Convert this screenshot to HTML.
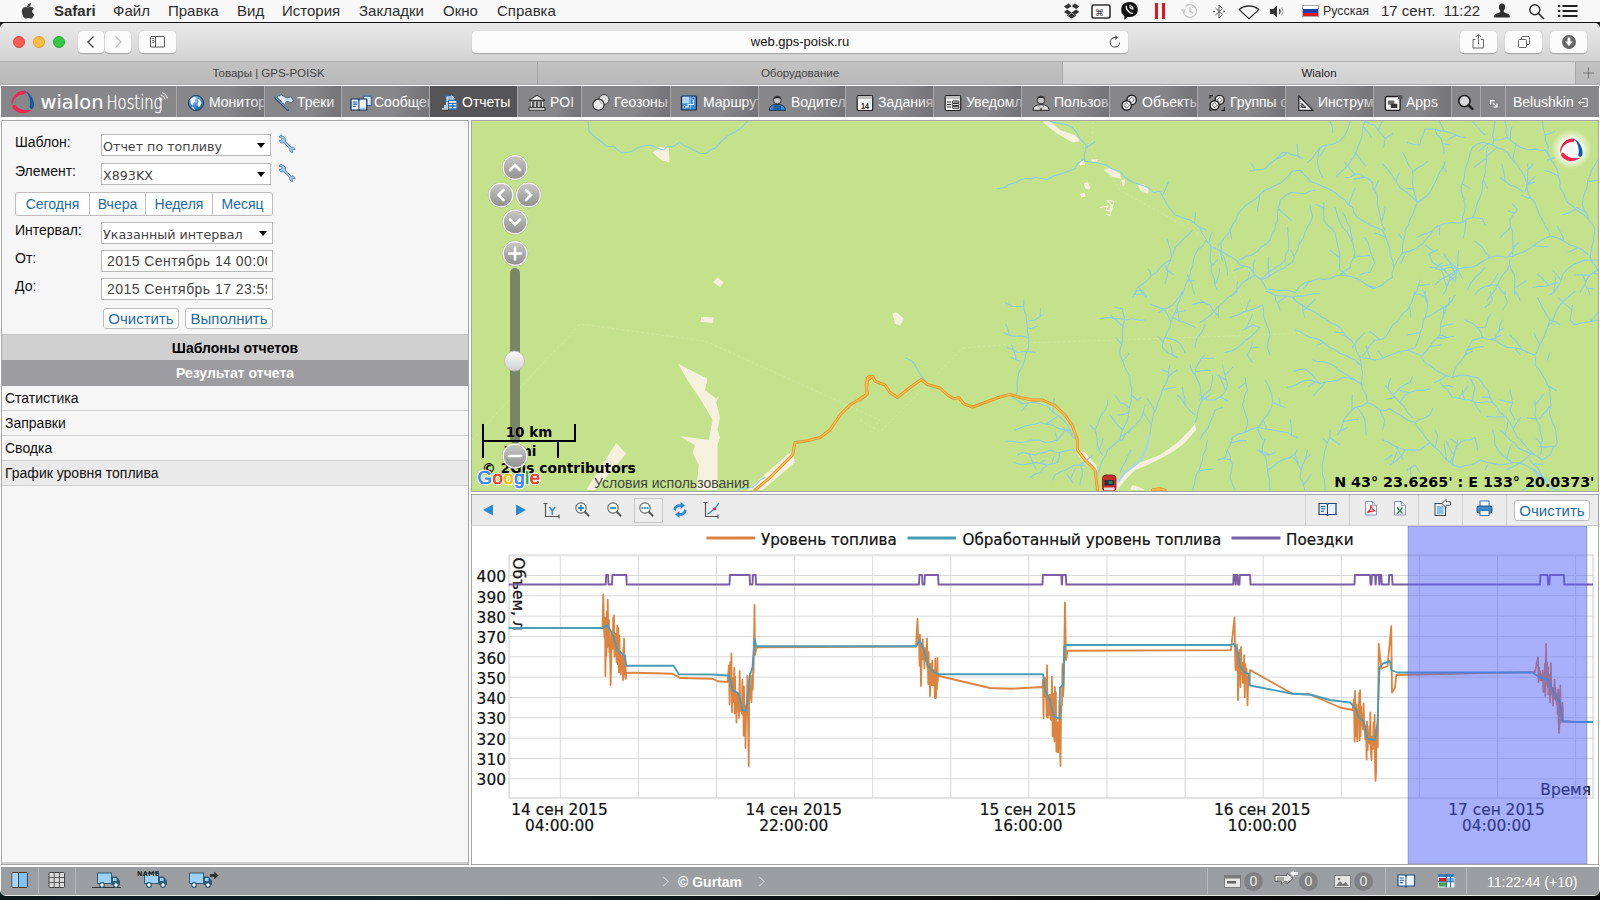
<!DOCTYPE html>
<html lang="ru">
<head>
<meta charset="utf-8">
<title>Wialon</title>
<style>
*{box-sizing:border-box;margin:0;padding:0}
html,body{width:1600px;height:900px;overflow:hidden;background:#fff}
body{font-family:"Liberation Sans",sans-serif;font-size:13px;color:#000;position:relative}
.abs{position:absolute}
/* ---------- mac menu bar ---------- */
#menubar{left:0;top:0;width:1600px;height:22px;background:#f8f8f8;color:#2e2e2e;font-size:15px;line-height:22px;white-space:nowrap}
#menubar span{position:absolute;top:0}
#menuline{left:0;top:22px;width:1600px;height:1px;background:#111}
/* ---------- safari toolbar ---------- */
#toolbar{left:0;top:23px;width:1600px;height:38px;background:linear-gradient(#e9e9e9,#d3d3d3);border-radius:5px 5px 0 0}
.tl{position:absolute;top:13px;width:12px;height:12px;border-radius:50%}
.tbtn{position:absolute;top:8px;height:22px;background:#fbfbfb;border-radius:4px;box-shadow:0 0.5px 1px rgba(0,0,0,.25)}
#urlbar{left:472px;top:8px;width:656px;height:22px;background:#fbfbfb;border-radius:4px;box-shadow:0 0.5px 1px rgba(0,0,0,.25);text-align:center;font-size:13px;line-height:22px;color:#111}
/* ---------- tab bar ---------- */
#tabbar{left:0;top:61px;width:1600px;height:24px;background:#bdbdbd;border-top:1px solid #b1b1b1;border-bottom:1px solid #a9a9a9;font-size:11.5px;color:#444}
.tab{position:absolute;top:0;height:22px;line-height:22px;text-align:center;background:linear-gradient(#c3c3c3,#b9b9b9);border-right:1px solid #a6a6a6}
.tab.act{background:linear-gradient(#dadada,#d0d0d0);color:#222}
/* ---------- wialon nav ---------- */
#nav{left:1px;top:86.2px;width:1598px;height:31.3px;background:#878789}
.ni{position:absolute;top:0;height:31.3px;overflow:hidden;white-space:nowrap;color:#fff;font-size:14px;line-height:31px;border-left:1px solid #a9a9ab;background:linear-gradient(90deg,#878789 0,#878789 58%,#747476 100%)}
.ni.act{background:#555557}
.ni .ic{position:absolute;left:8px;top:6.5px;width:22px;height:18px}
.ni .tx{position:absolute;left:32px;top:1px}
.ni .fade{position:absolute;right:0;top:0;width:14px;height:31px;background:linear-gradient(90deg,rgba(118,118,120,0),rgba(118,118,120,.55))}
.ni.act .fade{display:none}
/* ---------- left panel ---------- */
#left{left:1px;top:120px;width:468px;height:745px;background:#f6f6f6;border:1px solid #a5a5a7}
.lbl{position:absolute;left:13px;font-size:14px;color:#111;margin-top:-1px}
.sel{position:absolute;left:99px;width:170px;height:22px;background:#fff;border:1px solid #b9b9b9;font-family:"DejaVu Sans",sans-serif;font-size:12.7px;color:#444;line-height:19px;padding-left:1px;padding-top:1.5px;white-space:nowrap;overflow:hidden}
.sel:after{content:"";position:absolute;right:5px;top:8px;border:4px solid transparent;border-top:5px solid #000;border-bottom:0}
.inp{position:absolute;left:99px;width:172px;height:22px;background:#fff;border:1px solid #b9b9b9;font-size:14px;color:#444;line-height:21px;padding-left:5px;padding-right:5px;white-space:nowrap}
.inp span{display:block;overflow:hidden;letter-spacing:.45px}
.btn{position:absolute;height:24px;background:#fff;border:1px solid #bdbdbd;border-radius:3px;color:#1d6aa5;font-size:14px;line-height:22px;text-align:center}
.hdr{position:absolute;left:0;width:466px;height:25px;font-weight:bold;font-size:14px;line-height:26px;text-align:center}
.row{position:absolute;left:0;width:466px;height:25px;border-bottom:1px solid #d0d0d0;font-size:14px;line-height:24.5px;padding-left:3px;color:#111}
/* ---------- map ---------- */
#map{left:471px;top:120px;width:1128px;height:372px;background:#c4e28b;border:1px solid #a5a5a7;overflow:hidden}
/* ---------- chart ---------- */
#cbar{left:471px;top:494px;width:1128px;height:32px;background:#ececec;border:1px solid #a5a5a7;border-bottom-color:#cfcfcf}
.sep{position:absolute;top:0;width:1px;height:30px;background:#cfcfcf}
#chart{left:471px;top:526px;width:1128px;height:339px;background:#fff;border:1px solid #a5a5a7;border-top:0;overflow:hidden}
/* ---------- bottom ---------- */
#bottom{left:1px;top:866.6px;width:1598px;height:28.4px;background:#9d9ea1}
.bsep{position:absolute;top:1px;width:1px;height:26px;background:#b9b9bb}
.bdg{position:absolute;top:5px;width:19px;height:19px;border-radius:50%;background:#818183;color:#e9e9e9;font-size:14px;line-height:19px;text-align:center}
#desk{left:0;top:896px;width:1600px;height:4px;background:linear-gradient(90deg,#0a191e,#0d2229 25%,#0b0f0e 55%,#060604)}
</style>
</head>
<body>
<div id="menubar" class="abs">
 <svg class="abs" style="left:20px;top:1.500px" width="14.500" height="17.500" viewBox="0 0 15 18"><path fill="#3a3a3a" d="M10.3 4.2c.7-.9 1.1-2 1-3.2-1 .1-2.200.7-2.900 1.600-.600.800-1.200 1.900-1 3 1.100.1 2.200-.5 2.900-1.400z"/><path fill="#3a3a3a" d="M12.600 9.600c0-2 1.600-2.900 1.700-3-.9-1.400-2.400-1.600-2.900-1.600-1.200-.1-2.400.7-3 .7-.600 0-1.600-.7-2.600-.7-1.400 0-2.600.800-3.300 2-1.400 2.400-.400 6.100 1 8.100.7 1 1.500 2.100 2.500 2 1-.0 1.400-.6 2.600-.6s1.600.6 2.600.6c1.100 0 1.800-1 2.400-2 .8-1.100 1.100-2.200 1.100-2.300-.0 0-2.100-.8-2.100-3.200z"/></svg>
 <span style="left:54px;font-weight:bold">Safari</span>
 <span style="left:113px">Файл</span>
 <span style="left:168px">Правка</span>
 <span style="left:237px">Вид</span>
 <span style="left:282px">История</span>
 <span style="left:359px">Закладки</span>
 <span style="left:443px">Окно</span>
 <span style="left:497px">Справка</span>
 <!-- right status icons -->
 <svg class="abs" style="left:1062px;top:2px" width="22" height="18" viewBox="0 0 22 18"><g fill="#333"><path d="M6.500 1.500l-4.500 3 3.100 2.500 4.500-2.800zM2 10l4.500 3 3.100-2.600-4.500-2.800zM9.600 10.400l3.200 2.600 4.500-2.900-3.100-2.500zM17.300 4.500l-4.500-3-3.200 2.700 4.600 2.800zM9.600 11l-3.100 2.600-1.400-.9v1l4.500 2.700 4.600-2.700v-1l-1.400.9z"/></g></svg>
 <svg class="abs" style="left:1091px;top:3px" width="20" height="17" viewBox="0 0 20 17"><rect x="1" y="2" width="18" height="13" rx="1.500" fill="none" stroke="#333" stroke-width="1.600"/><text x="4" y="12.500" font-size="9" font-family="DejaVu Sans,sans-serif" fill="#333">⌘</text></svg>
 <svg class="abs" style="left:1120px;top:1px" width="19" height="20" viewBox="0 0 19 20"><path fill="#111" d="M9.500 1C4.500 1 1.200 3.800 1.200 8.800c0 3 1.100 5 3.100 6.200v3.800l3.200-2.900c.6.100 1.300.1 2 .1 5 0 8.300-2.700 8.300-7.200S14.500 1 9.500 1z"/><path fill="none" stroke="#fff" stroke-width="1.300" stroke-linecap="round" d="M6.300 5.200c-.5 3 2.600 6.700 6 7.100M9.800 4.700c1.800.2 3 1.500 3.100 3.300M10 6.600c.7.100 1.200.6 1.300 1.300"/></svg>
 <div class="abs" style="left:1155px;top:3px;width:3px;height:16px;background:#e0161c"></div>
 <div class="abs" style="left:1162px;top:3px;width:3px;height:16px;background:#e0161c"></div>
 <svg class="abs" style="left:1180px;top:2px" width="20" height="18" viewBox="0 0 20 18"><g fill="none" stroke="#c4c4c4" stroke-width="1.300"><path d="M3.500 9a6.500 6.500 0 1 0 2-4.700"/><path d="M10 5v4.300l3 1.700"/></g><path fill="#c4c4c4" d="M.8 7.500h5.400L3.500 10.800z"/></svg>
 <svg class="abs" style="left:1212px;top:3px" width="14" height="17" viewBox="0 0 14 17"><g fill="none" stroke="#555" stroke-width="1"><path d="M3.500 5l7 6.500L7 15V2l3.500 3.500-7 6.500"/></g><circle cx="2" cy="8.500" r=".9" fill="#555"/><circle cx="12" cy="8.500" r=".9" fill="#555"/></svg>
 <svg class="abs" style="left:1238px;top:4px" width="22" height="16" viewBox="0 0 22 16"><path fill="none" stroke="#333" stroke-width="1.300" stroke-linejoin="round" d="M1.200 5.600C6.500.8 15.500.8 20.800 5.600L11 14.800z"/></svg>
 <svg class="abs" style="left:1269px;top:4px" width="18" height="15" viewBox="0 0 18 15"><path fill="#333" d="M1 5h3.200L8 1.500v12L4.200 10H1z"/><path fill="none" stroke="#333" stroke-width="1.200" d="M10.300 5.200c1 1.400 1 3.200 0 4.600"/><path fill="none" stroke="#999" stroke-width="1.100" d="M12.600 3.700c1.700 2.300 1.700 5.300 0 7.600"/></svg>
 <div class="abs" style="left:1302px;top:5px;width:17px;height:12px;border:0.5px solid #aaa;background:linear-gradient(#fff 0,#fff 33%,#1c3fb4 33%,#1c3fb4 66%,#e3171f 66%)"></div>
 <span style="left:1323px;font-size:12.4px">Русская</span>
 <span style="left:1381px">17 сент.&nbsp; 11:22</span>
 <svg class="abs" style="left:1493px;top:3px" width="18" height="16" viewBox="0 0 18 16"><path fill="#2e2e2e" d="M9 .5c2 0 3.100 1.500 3.100 3.400 0 1.500-.6 2.900-1.300 3.700-.3.400-.2 1.300.3 1.600l4.200 1.900c.9.400 1.400 1 1.400 2v1.400H1.300v-1.400c0-1 .5-1.600 1.400-2l4.200-1.900c.5-.3.600-1.200.3-1.600C6.500 6.800 5.900 5.400 5.900 3.900 5.900 2 7 .5 9 .5z"/></svg>
 <svg class="abs" style="left:1528px;top:3px" width="17" height="17" viewBox="0 0 17 17"><circle cx="6.800" cy="6.800" r="5" fill="none" stroke="#2e2e2e" stroke-width="1.500"/><path d="M10.500 10.500l5 5" stroke="#2e2e2e" stroke-width="1.700" stroke-linecap="round"/></svg>
 <svg class="abs" style="left:1558px;top:5px" width="20" height="12" viewBox="0 0 20 12"><g fill="#222"><rect x="0" y="0" width="2.200" height="2"/><rect x="4.500" y="0" width="15" height="2"/><rect x="0" y="5" width="2.200" height="2"/><rect x="4.500" y="5" width="15" height="2"/><rect x="0" y="10" width="2.200" height="2"/><rect x="4.500" y="10" width="15" height="2"/></g></svg>
</div>
<div id="menuline" class="abs"></div>
<div class="abs" style="left:0;top:23px;width:1600px;height:8px;background:#111"></div>
<div id="toolbar" class="abs">
 <div class="tl" style="left:13px;background:#fc5b57;border:0.5px solid #e1453f"></div>
 <div class="tl" style="left:33px;background:#fdbc40;border:0.5px solid #dfa031"></div>
 <div class="tl" style="left:53px;background:#34c84a;border:0.5px solid #27aa35"></div>
 <div class="tbtn" style="left:78px;width:26px"><svg width="26" height="22" viewBox="0 0 26 22"><path d="M15.500 5.500l-5.500 5.500 5.500 5.500" fill="none" stroke="#4d4d4d" stroke-width="1.400"/></svg></div>
 <div class="tbtn" style="left:105px;width:26px"><svg width="26" height="22" viewBox="0 0 26 22"><path d="M10.500 5.500l5.500 5.500-5.500 5.500" fill="none" stroke="#c2c2c2" stroke-width="1.400"/></svg></div>
 <div class="tbtn" style="left:139px;width:37px"><svg width="37" height="22" viewBox="0 0 37 22"><rect x="11.500" y="5.500" width="14" height="10.500" rx="1" fill="none" stroke="#555" stroke-width="1"/><path d="M16.500 5.500v10.500" stroke="#555" stroke-width="1"/><path d="M13 7.500h2M13 9.500h2M13 11.500h2" stroke="#555" stroke-width=".8"/></svg></div>
 <div id="urlbar" class="abs">web.gps-poisk.ru
  <svg class="abs" style="left:635px;top:3px" width="16" height="16" viewBox="0 0 16 16"><path d="M12.600 8.500A4.700 4.700 0 1 1 8 3.600h1" fill="none" stroke="#555" stroke-width="1.100"/><path d="M8.300 1.200l2.800 2.400-2.800 2.300z" fill="#555"/></svg>
 </div>
 <div class="tbtn" style="left:1460px;width:37px"><svg width="37" height="22" viewBox="0 0 37 22"><path d="M15.500 8.500h-2.500v8.500h10.500v-8.500h-2.500M18.500 13V3.500M15.800 6l2.700-2.700L21.200 6" fill="none" stroke="#666" stroke-width="1"/></svg></div>
 <div class="tbtn" style="left:1505px;width:37px"><svg width="37" height="22" viewBox="0 0 37 22"><rect x="13.500" y="8.500" width="8" height="8" rx="1" fill="none" stroke="#666" stroke-width="1"/><path d="M16.500 8.500v-2a1 1 0 0 1 1-1h6a1 1 0 0 1 1 1v6a1 1 0 0 1-1 1h-2" fill="none" stroke="#666" stroke-width="1"/></svg></div>
 <div class="tbtn" style="left:1550px;width:37px"><svg width="37" height="22" viewBox="0 0 37 22"><circle cx="19" cy="11" r="7" fill="#666"/><path d="M17.600 6.500h2.800v4h2.600l-4 4.500-4-4.500h2.600z" fill="#fff"/></svg></div>
</div>
<div id="tabbar" class="abs">
 <div class="tab" style="left:0;width:538px">Товары | GPS-POISK</div>
 <div class="tab" style="left:538px;width:525px">Оборудование</div>
 <div class="tab act" style="left:1063px;width:513px">Wialon</div>
 <div class="tab" style="left:1576px;width:24px;border:0"><svg width="24" height="22" viewBox="0 0 24 22"><path d="M12.500 5.500v11M7 11h11" stroke="#777" stroke-width="1"/></svg></div>
</div>



<div id="nav" class="abs">
<div class="abs" style="left:0;top:0;width:175px;height:31px">
<svg width="175" height="31" viewBox="0 0 175 31">
 <g transform="translate(21.800,15.500)"><path d="M2,-10.700 C-3,-11.800 -9,-7.500 -11.100,-0.600 C-11.500,1 -11.300,2.800 -10.800,3.900 C-10.300,0 -8.300,-3.500 -5,-5.600 C-3.200,-6.800 -1.200,-7 1.800,-7.600 C3.800,-8.200 3.600,-10.400 2,-10.700 Z" fill="#f0244e"/><path d="M-10.300,5 C-10.500,7 -7.500,10 -3,11.300 C1,12.300 6,11 9.200,8.200 C6,9.300 1,9 -2.500,7.600 C-5,6.500 -6.500,4.500 -7.800,3.600 C-9,3 -10.200,3.800 -10.300,5 Z" fill="#f0244e"/><path d="M1.700,-11.100 C6,-9.500 9.500,-5 10.800,0 C11.600,3 11.300,5.500 9.900,7.100 C8.800,8 7,7.200 6.900,5.600 C7.800,2 7.500,-2.500 5.500,-6.500 C4.500,-8.500 3,-10 1.700,-11.100 Z" fill="#0f5aa8"/></g>
 <text x="39.500" y="22.800" font-family="DejaVu Sans,sans-serif" font-size="19.500" fill="#fff" stroke="#fff" stroke-width=".1" textLength="63" lengthAdjust="spacingAndGlyphs">wialon</text>
 <text x="105.500" y="22.800" font-family="DejaVu Sans,sans-serif" font-weight="200" font-size="20" fill="#fff" stroke="#fff" stroke-width=".35" textLength="56" lengthAdjust="spacingAndGlyphs">Hosting</text>
 <g fill="none" stroke="#fff" stroke-width="1" stroke-linecap="round"><path d="M158.500,11.500a3 3 0 0 1 2.500 2.500"/><path d="M160,9a5.500 5.500 0 0 1 4 4"/><path d="M161.500,6.500a8 8 0 0 1 5 5.500"/></g>
</svg></div>
<div class="ni" style="left:175px;width:88px"><svg class="ic" viewBox="0 0 22 18"><defs><radialGradient id="gg" cx=".4" cy=".3" r=".8"><stop offset="0" stop-color="#8ec6f4"/><stop offset=".6" stop-color="#2f7fcc"/><stop offset="1" stop-color="#1b4f8c"/></radialGradient></defs><circle cx="11" cy="10" r="7.600" fill="url(#gg)" stroke="#2f3b4a" stroke-width="1"/><path d="M5.500,6.500 c1.500,-2 3.500,-2.500 5,-2.300 l1,1.600 -1.800,1 .8,1.800 -2,1.200 -.8,3 -1.800,-2 z M12.500,5.500 l2.500,1.200 1.500,3.300 -1.500,3.500 -2,.5 -.5,-3 1,-2.500z M7,13.500 l2,1 1,2.500 -2,-1z" fill="#f2f8fd"/></svg><span class="tx">Мониторинг</span><i class="fade"></i></div>
<div class="ni" style="left:263px;width:77px"><svg class="ic" viewBox="0 0 22 18"><path d="M3.600,4.400 L8,1.900 L14.200,5 L18,3.700 L20.500,7.500 L18,10 L14.200,8.100 L11.700,10.600 Z" fill="#cfe5f8" stroke="#3d5f82" stroke-width=".9" stroke-linejoin="round"/><path d="M8,1.900 L11.700,10.600 M5.500,3.500 l5,6.500" stroke="#fff" stroke-width="1"/><path d="M2.400,5 L14.900,16.900" stroke="#27496d" stroke-width="2.200" stroke-linecap="round"/><path d="M2.800,4.800 L15,16.300" stroke="#a6d2f5" stroke-width=".9" stroke-linecap="round"/></svg><span class="tx">Треки</span><i class="fade"></i></div>
<div class="ni" style="left:340px;width:88px"><svg class="ic" viewBox="0 0 22 18"><rect x="13.400" y="3.200" width="7.800" height="9.300" fill="#d9ecfc" stroke="#2b5c9a" stroke-width="1"/><path d="M1,6 h7.200 l.7,.8 .7,-.8 h7.200 v11 h-7.200 l-.7,.7 -.7,-.7 h-7.200z" fill="#e6f2fd" stroke="#162f4f" stroke-width="1.200" stroke-linejoin="round"/><path d="M8.900,6.800 v10.500" stroke="#162f4f" stroke-width="1"/><path d="M2.800,9 h4.500 M2.800,11.200 h4.500 M2.800,13.400 h3" stroke="#2b5c9a" stroke-width="1.200"/><rect x="10.300" y="14.500" width="5.500" height="1.500" fill="#9fcdf3"/></svg><span class="tx">Сообщения</span><i class="fade"></i></div>
<div class="ni act" style="left:428px;width:88px"><svg class="ic" viewBox="0 0 22 18"><rect x="8" y="3" width="8" height="6" fill="#fff" stroke="#2b6cb0" stroke-width="1"/><path d="M9.500,5 h5 M9.500,7 h5" stroke="#2b6cb0" stroke-width="1"/><path d="M13.500,2.800 l3,2.700" stroke="#ddd" stroke-width="1"/><rect x="10.400" y="7.400" width="8.600" height="8.600" rx="1" fill="#fff" stroke="#2b6cb0" stroke-width="1.400"/><path d="M11,10.300 h7.500 M11,13 h7.500 M14.700,10.300 v5.500" stroke="#2b6cb0" stroke-width="1.300"/><path d="M5,17 v-2 M7,17 v-5 M9,17 v-8" stroke="#e6f0fa" stroke-width="1.500"/><path d="M4,17.300 h6.500" stroke="#333" stroke-width=".8"/></svg><span class="tx">Отчеты</span><i class="fade"></i></div>
<div class="ni" style="left:516px;width:64px"><svg class="ic" viewBox="0 0 22 18"><path d="M11,2.300 L3,7.300 h16z" fill="#f6f6f6" stroke="#222" stroke-width="1" stroke-linejoin="round"/><path d="M5.300,8.500 v5.800 M9.100,8.500 v5.800 M12.900,8.500 v5.800 M16.700,8.500 v5.800" stroke="#222" stroke-width="2.800"/><path d="M5.300,8.500 v5.800 M9.100,8.500 v5.800 M12.900,8.500 v5.800 M16.700,8.500 v5.800" stroke="#f6f6f6" stroke-width="1.400"/><rect x="3" y="14.800" width="16" height="2.400" fill="#f6f6f6" stroke="#222" stroke-width=".9"/></svg><span class="tx">POI</span><i class="fade"></i></div>
<div class="ni" style="left:580px;width:89px"><svg class="ic" viewBox="0 0 22 18"><circle cx="14" cy="6.500" r="5" fill="#dcdcdc" stroke="#3a3a3a" stroke-width="1"/><circle cx="8.500" cy="11.700" r="5.600" fill="#ececec" stroke="#2a2a2a" stroke-width="1.100"/><path d="M9.500,6.300 a5 5 0 0 0 4.300,5" fill="none" stroke="#888" stroke-width=".7"/></svg><span class="tx">Геозоны</span><i class="fade"></i></div>
<div class="ni" style="left:669px;width:88px"><svg class="ic" viewBox="0 0 22 18"><rect x="2.500" y="3" width="15" height="14" rx="1" fill="#3f8ad4" stroke="#172c47" stroke-width="1.200"/><rect x="3.300" y="3.800" width="7" height="6.500" fill="#bfe0fb"/><path d="M3.300,6 h7 M3.300,8 h7" stroke="#8cc4f0" stroke-width=".8"/><path d="M11.500,3.500 v13" stroke="#8cc4f0" stroke-width=".8"/><path d="M5.500,14 h3.500 v-2.500 h5.500 v-6" fill="none" stroke="#e9f4fd" stroke-width="1.200"/><circle cx="5.500" cy="14" r="1.300" fill="#1b4f8c" stroke="#e9f4fd" stroke-width=".6"/><circle cx="14.500" cy="5.500" r="1.300" fill="#1b4f8c" stroke="#e9f4fd" stroke-width=".6"/></svg><span class="tx">Маршруты</span><i class="fade"></i></div>
<div class="ni" style="left:757px;width:87px"><svg class="ic" viewBox="0 0 22 18"><path d="M2.300,17.300 c0,-4 2.500,-5.800 8,-5.800 s8,1.800 8,5.800z" fill="#3f8ad4" stroke="#172c47" stroke-width="1"/><path d="M6.500,17 v-4.500 h7.500 v4.500" fill="#1f5c9a"/><circle cx="10.300" cy="7" r="3.900" fill="#c9c9c9" stroke="#2a2a2a" stroke-width=".9"/><path d="M6.300,6.500 c.3,-4.500 7.700,-4.500 8,0 c-2,-1.800 -6,-1.800 -8,0z" fill="#2a2a2a"/></svg><span class="tx">Водители</span><i class="fade"></i></div>
<div class="ni" style="left:844px;width:88px"><svg class="ic" viewBox="0 0 22 18"><rect x="3.200" y="2.500" width="15.500" height="15" rx="1.500" fill="#f4f4f4" stroke="#222" stroke-width="1.200"/><path d="M3.800,3 h14.300 v2.500 l-.9,.8 -.9,-.8 -.9,.8 -.9,-.8 -.9,.8 -.9,-.8 -.9,.8 -.9,-.8 -.9,.8 -.9,-.8 -.9,.8 -.9,-.8 -.9,.8 -.9,-.8 -.9,.8 -.8,-.8z" fill="#bdbdbd"/><text x="11" y="15.600" font-size="9" font-weight="bold" text-anchor="middle" font-family="Liberation Sans,sans-serif" fill="#222" textLength="8" lengthAdjust="spacingAndGlyphs">14</text></svg><span class="tx">Задания</span><i class="fade"></i></div>
<div class="ni" style="left:932px;width:88px"><svg class="ic" viewBox="0 0 22 18"><rect x="3.200" y="2.500" width="15.500" height="15" rx="1.500" fill="#f4f4f4" stroke="#222" stroke-width="1.200"/><path d="M3.800,3 h14.300 v2.500 l-.9,.8 -.9,-.8 -.9,.8 -.9,-.8 -.9,.8 -.9,-.8 -.9,.8 -.9,-.8 -.9,.8 -.9,-.8 -.9,.8 -.9,-.8 -.9,.8 -.9,-.8 -.9,.8 -.8,-.8z" fill="#bdbdbd"/><path d="M5,9 h4 M5,11.500 h4 M5,14 h4" stroke="#333" stroke-width="1.200"/><rect x="10.300" y="8" width="6.800" height="2" rx=".8" fill="none" stroke="#222" stroke-width="1"/><rect x="10.300" y="10.600" width="6.800" height="2" rx=".8" fill="none" stroke="#222" stroke-width="1"/><rect x="10.300" y="13.200" width="6.800" height="2" rx=".8" fill="none" stroke="#222" stroke-width="1"/></svg><span class="tx">Уведомления</span><i class="fade"></i></div>
<div class="ni" style="left:1020px;width:88px"><svg class="ic" viewBox="0 0 22 18"><path d="M3,17.300 c0,-3.500 2.500,-5.500 8,-5.500 s8,2 8,5.500z" fill="#e2e2e2" stroke="#222" stroke-width="1"/><path d="M11,12 l-2.500,1.500 2.500,3.500 2.500,-3.500z" fill="#fafafa" stroke="#444" stroke-width=".5"/><path d="M11,13 l-.8,3.800 h1.600z" fill="#333"/><circle cx="11" cy="7" r="3.900" fill="#c4c4c4" stroke="#222" stroke-width=".9"/><path d="M7,6.300 c.3,-4.300 7.700,-4.300 8,0 c-2,-1.600 -6,-1.600 -8,0z" fill="#333"/></svg><span class="tx">Пользователи</span><i class="fade"></i></div>
<div class="ni" style="left:1108px;width:88px"><svg class="ic" viewBox="0 0 22 18"><circle cx="13.600" cy="6.900" r="4.700" fill="#f0f0f0" stroke="#1e1e1e" stroke-width="1.400"/><circle cx="8.600" cy="12.500" r="4.700" fill="#f0f0f0" stroke="#1e1e1e" stroke-width="1.400"/><path d="M13.600,4.200 l2.500,2.700 -2.500,2.700 -2.500,-2.700z M8.600,9.800 l2.500,2.700 -2.500,2.700 -2.500,-2.700z" fill="#fff" stroke="#555" stroke-width=".9"/></svg><span class="tx">Объекты</span><i class="fade"></i></div>
<div class="ni" style="left:1196px;width:88px"><svg class="ic" viewBox="0 0 22 18"><circle cx="13.600" cy="6.900" r="4.500" fill="#f0f0f0" stroke="#1e1e1e" stroke-width="1.400"/><circle cx="8.600" cy="12.300" r="4.500" fill="#f0f0f0" stroke="#1e1e1e" stroke-width="1.400"/><path d="M13.600,4.300 l2.400,2.600 -2.400,2.600 -2.400,-2.600z M8.600,9.700 l2.400,2.600 -2.400,2.600 -2.400,-2.600z" fill="#fff" stroke="#555" stroke-width=".9"/><path d="M4,5.500 v-2.800 h3 M18.300,14 v3.300 h-3 M4,14.500 v2.800 h1.500" fill="none" stroke="#1e1e1e" stroke-width="1.200"/></svg><span class="tx">Группы объектов</span><i class="fade"></i></div>
<div class="ni" style="left:1284px;width:88px"><svg class="ic" viewBox="0 0 22 18"><path d="M4.800,3 V17.400 H19z" fill="#efefef" stroke="#222" stroke-width="1.200" stroke-linejoin="round"/><path d="M7.800,10.300 V14.600 H12z" fill="#8a8a8c" stroke="#222" stroke-width=".9" stroke-linejoin="round"/><path d="M5.500,6.500 h1.200 M5.500,8.500 h1.200 M5.500,10.500 h1.200 M5.500,12.500 h1.200 M5.500,14.500 h1.200" stroke="#555" stroke-width=".7"/></svg><span class="tx">Инструменты</span><i class="fade"></i></div>
<div class="ni" style="left:1372px;width:78px"><svg class="ic" viewBox="0 0 22 18"><rect x="3.300" y="3.500" width="14.800" height="14" rx="1.800" fill="#f3f3f3" stroke="#1e1e1e" stroke-width="1.300"/><rect x="5.800" y="7.500" width="6.500" height="4.300" rx=".6" fill="#6a6a6a"/><rect x="8.800" y="10.800" width="6.500" height="4.300" rx=".6" fill="#333"/><rect x="16" y="2.300" width="4.600" height="3.800" rx=".6" fill="#555"/></svg><span class="tx">Apps</span><i class="fade"></i></div>
<div class="ni" style="left:1450px;width:29px;background:#878789"><svg class="abs" style="left:5px;top:7px" width="20" height="20" viewBox="0 0 20 20"><circle cx="7.400" cy="8.100" r="5.600" fill="#d8d8d8" stroke="#1a1a1a" stroke-width="1.500"/><path d="M11.500,12.200 l4,3.800" stroke="#1a1a1a" stroke-width="2.400" stroke-linecap="round"/></svg></div>
<div class="ni" style="left:1479px;width:25px;background:#878789"><svg class="abs" style="left:8.500px;top:13.500px" width="8" height="8" viewBox="0 0 8 8"><path d="M.6,5 V.6 H5" fill="none" stroke="#fff" stroke-width="1.100"/><path d="M2.800,2.800 l4,4 M7,3.600 v3.400 h-3.400" fill="none" stroke="#fff" stroke-width="1.200"/></svg></div>
<div class="ni" style="left:1504px;width:94px;background:#878789"><span class="tx" style="left:7px">Belushkin</span><svg class="abs" style="left:71.500px;top:11.500px" width="10" height="9" viewBox="0 0 10 9"><path d="M4,.6 h5.200 v7.800 H4" fill="none" stroke="#fff" stroke-width="1"/><path d="M6.500,4.500 H.8 M2.800,2.300 L.8,4.500 2.800,6.700" fill="none" stroke="#fff" stroke-width="1"/></svg></div>
</div>
<div id="left" class="abs">
 <div class="lbl" style="top:14px">Шаблон:</div>
 <div class="sel" style="top:13px">Отчет по топливу</div>
 <svg class="abs wr" style="left:276px;top:13px" width="19" height="19" viewBox="0 0 19 19"><path d="M3.200 1.200c-1 .3-1.800 1-2.200 2l2.300.2.700 1.400-1.300 1.700-1.600-.3c.2 1.300 1 2.200 2.100 2.600 1 .4 1.900.3 2.700-.1l5.800 6.100c-.3 1-.1 2 .6 2.700.7.700 1.600 1 2.500.9l-.6-1.700 1.100-1.300 1.800.2c-.1-.9-.6-1.700-1.500-2.200-.8-.5-1.700-.5-2.500-.2L7.300 7.100c.4-.9.400-1.900 0-2.800-.5-1-1.400-1.700-2.500-1.900z" fill="#9cc6ee" stroke="#4a6f96" stroke-width=".8" stroke-linejoin="round"/></svg>
 <div class="lbl" style="top:43px">Элемент:</div>
 <div class="sel" style="top:42px">X893KX</div>
 <svg class="abs wr" style="left:276px;top:42px" width="19" height="19" viewBox="0 0 19 19"><path d="M3.200 1.200c-1 .3-1.800 1-2.200 2l2.300.2.700 1.400-1.300 1.700-1.600-.3c.2 1.300 1 2.200 2.100 2.600 1 .4 1.900.3 2.700-.1l5.800 6.100c-.3 1-.1 2 .6 2.700.7.700 1.600 1 2.500.9l-.6-1.700 1.100-1.300 1.800.2c-.1-.9-.6-1.700-1.500-2.200-.8-.5-1.700-.5-2.500-.2L7.300 7.100c.4-.9.400-1.900 0-2.800-.5-1-1.400-1.700-2.500-1.900z" fill="#9cc6ee" stroke="#4a6f96" stroke-width=".8" stroke-linejoin="round"/></svg>
 <div class="abs" style="left:13px;top:71px;width:258px;height:24px;background:#fff;border:1px solid #bdbdbd;border-radius:3px"></div>
 <div class="btn" style="left:13px;top:71px;width:75px;border-color:transparent #bdbdbd transparent transparent;border-radius:0;background:none">Сегодня</div>
 <div class="btn" style="left:87px;top:71px;width:57px;border-color:transparent #bdbdbd transparent transparent;border-radius:0;background:none">Вчера</div>
 <div class="btn" style="left:143px;top:71px;width:68px;border-color:transparent #bdbdbd transparent transparent;border-radius:0;background:none">Неделя</div>
 <div class="btn" style="left:210px;top:71px;width:61px;border-color:transparent;border-radius:0;background:none">Месяц</div>
 <div class="lbl" style="top:102px">Интервал:</div>
 <div class="sel" style="top:101px;width:172px">Указанный интервал</div>
 <div class="lbl" style="top:130px">От:</div>
 <div class="inp" style="top:129px"><span>2015 Сентябрь 14 00:00</span></div>
 <div class="lbl" style="top:158px">До:</div>
 <div class="inp" style="top:157px"><span>2015 Сентябрь 17 23:59</span></div>
 <div class="btn" style="left:101px;top:187px;width:76px;height:21px;line-height:20px;font-size:15px">Очистить</div>
 <div class="btn" style="left:183px;top:187px;width:88px;height:21px;line-height:20px;font-size:15px">Выполнить</div>
 <div class="abs" style="left:0;top:213px;width:466px;height:1px;background:#c4c4c4"></div>
 <div class="hdr" style="top:214px;background:#d1d0d1;color:#000">Шаблоны отчетов</div>
 <div class="hdr" style="top:239px;height:26px;background:#9d9d9f;color:#fff">Результат отчета</div>
 <div class="row" style="top:265px">Статистика</div>
 <div class="row" style="top:290px">Заправки</div>
 <div class="row" style="top:315px">Сводка</div>
 <div class="row" style="top:340px;background:#eaeaea">График уровня топлива</div>
 <div class="abs bottomband" style="left:0;top:741px;width:466px;height:2px;background:#d1d0d1"></div>
</div>

<div id="map" class="abs">
<svg class="abs" style="left:0;top:0" width="1127" height="370" viewBox="472 121 1127 370">
<defs>
<linearGradient id="gb" x1="0" y1="0" x2="0" y2="1"><stop offset="0" stop-color="#c9c9c9"/><stop offset="1" stop-color="#8f8f8f"/></linearGradient>
<linearGradient id="gh" x1="0" y1="0" x2="0" y2="1"><stop offset="0" stop-color="#fdfdfd"/><stop offset="1" stop-color="#cfcfcf"/></linearGradient>
<radialGradient id="glow"><stop offset="0" stop-color="#f4f4f4" stop-opacity="1"/><stop offset=".5" stop-color="#fff" stop-opacity=".98"/><stop offset=".68" stop-color="#fff" stop-opacity=".55"/><stop offset="1" stop-color="#fff" stop-opacity="0"/></radialGradient>
</defs>
<path d="M678,363.8 707.5,378.8 705,390 716.2,398.8 718.8,396.2 716.2,402.5 720,417.5 717.5,430 720,437.5 717.5,445 717.5,490 696.2,490 698.8,465 692.5,452.5 695,445 680,436.2 708.8,440 712.5,420 702.5,402.5 687.5,380Z M616.2,443 626.2,453.8 595,490 586.2,490Z M792.5,450 795,462.5 762.5,490 747.5,490Z M701.2,317 713.8,317.5 713,323 700.5,322Z M652.5,152.5 660,147 668.8,148 669.5,162.5 661.2,160Z M717.5,277.5 723.8,282.5 720,287 713,282.5Z M1042.5,121.2 1050,121.2 1060,130 1075,135 1080,141.2 1072.5,142.5 1057.5,133.8 1047.5,126.2Z M1103.8,170 1110,168 1120,173.8 1121.2,178.8 1112.5,177Z M1137.5,185.5 1143.8,183.8 1148.8,190 1147.5,193.8 1141.2,191.2Z M1083.8,183.8 1087.5,182 1090.5,187.5 1088.8,190 1085,188Z M1080,194 1084.5,193 1085.5,196.5 1081.5,197.5Z M892.5,313.8 896.2,312 903.8,318.8 900,325.5 895,323.8Z M1078.8,161.2 1083.8,160 1085,164.5 1080,165.5Z M1091.2,159.5 1097.5,159.5 1097.5,161.5 1092,161.5Z M1121.2,180 1125,179.5 1124.5,185.5 1122.5,186.2Z M1076.2,450 1085,452.5 1096.2,465 1097.5,470 1092.5,470 1080,457.5Z M1195,423.8 1196.2,430 1182.5,445 1167.5,455 1147.5,465 1135,470 1125,480 1117.5,490 1115,482.5 1125,472.5 1140,462.5 1160,455 1177.5,442.5 1190,430Z M1130,490 1132.5,485 1140,487.5 1145,490Z" fill="#f6f1df"/>
<path d="M1100,207.5 1107.5,206.2 1106.2,210 1110,211.2 1111.2,205 1107.5,200.5 1113.8,201.2 1110,215 1106.2,214.5" fill="none" stroke="#f6f1df" stroke-width="1.200"/>
<g fill="none" stroke="#d5e8a8" stroke-width=".7" stroke-dasharray="3 2"><path d="M561,345 L580,324 L705,341 L880,420 L870,432"/><path d="M963,348 L1027,343 L1260,335 L1300,333"/><path d="M1093,121 L1092,150 L1120,190 L1200,235 L1230,260 L1250,330"/><path d="M472,440 L560,345"/><path d="M860,420 L880,432 L963,348"/></g>
<path d="M1200,227.5 1201.8,232.8 1205,237.5 1207.6,242.2 1211.2,246.2 1218.8,250 1223.2,252.3 1227.5,255 1232.8,257.6 1237.5,261.2 1240,265 1245,266.3 1250,267.5 1255,275 1261.2,280 1263.9,284.3 1266.2,288.8 1275,290 1280,290.6 1285,290 1290.1,290.8 1295,292.5 M1295,292.5 1299.4,286.9 1305,282.5 1311.5,281.4 1317.5,278.8 1323.8,279.4 1330,278.8 1334.8,276.4 1340,275 1345,275.6 1350,276.2 1355,278 1360,280 1364.4,283.2 1368.9,286.4 1373.8,288.8 1382.5,285 1387,280.5 1392.5,277.5 1392.1,272.4 1393.8,267.5 1397.5,260 1402.5,252.5 1409,251.4 1415,248.8 1422.5,243.8 1426.1,239.3 1430,235 1435,227.5 1443.8,223.8 1452.5,222.5 1457.5,223.1 1462.5,222.5 1467,219 1472.5,217.5 1477.5,218 1482.5,218.8 1485,225 M1218.8,245 1225,237.5 1229.6,231.8 1232.5,225 1235.9,220.4 1237.5,215 1241,210.1 1245.2,206 1250,202.5 1255.5,198.9 1260.3,194.6 1265,190 1270.1,188.3 1274.8,185.5 1280,183.8 1284.3,179.8 1288.5,175.6 1292.5,171.2 1300,170 1303.2,173.9 1307.2,177 1310,181.2 1316.3,183.6 1322.5,186.2 1328.9,189.1 1335,192.5 1339.7,196.6 1345,200 1348,204.5 1352.5,207.5 1354.1,212.9 1357.5,217.5 1363.7,221.3 1370,225 1376.3,227.4 1382.5,230 1385.5,236.1 1387.5,242.5 1389.8,248.5 1390,255 1392.9,260.9 1393.8,267.5 M1250,171.2 1254.9,169.8 1260,169.7 1265,168.8 1269.2,164.5 1273.9,160.8 1278.3,156.8 1282.5,152.5 1287.7,152.8 1292.5,155 1297.9,155.9 1302.5,158.8 M1322.5,177.5 1320.3,172.7 1318.3,167.8 1317.5,162.5 1318.1,157.5 1318.4,152.4 1320,147.5 1324.8,145.3 1329.9,144.8 1335,143.8 1340.6,140.1 1345,135 1348.1,128.3 1350,121.2 M1336.2,176.2 1341,171.8 1345.8,167.4 1350,162.5 1353.1,157.8 1355.9,152.9 1357.5,147.5 1359.7,142.7 1361.7,137.8 1362.5,132.5 1362.7,126.6 1365,121.2 M1365,121.2 1369.8,123.7 1375,125 1377.8,130 1381.7,134.2 1385,138.8 1383.8,147.5 M1385,138.8 1392.5,133.8 M1240,260 1245.6,256.5 1252.1,255 1257.5,251.2 1261.1,246.9 1266.1,244.1 1270,240 1271.7,234.6 1275,230 1275.3,224.9 1277.7,220.2 1277.5,215 1277.7,209.9 1279.5,205.1 1280,200 1284.9,196.2 1290,192.5 1295,192.8 1300,193.4 1305,193.8 1309.8,191.3 1315,190 M1287.5,227.5 1288,233.3 1288.6,239.1 1288.8,245 1288.3,250.2 1285.5,254.8 1285,260 1281.5,264.2 1276.7,266.7 1272.5,270 1267.8,272.2 1264.7,276.6 1260,278.8 M1310,205 1311.1,211.3 1312.5,217.5 1310.1,222.6 1307.3,227.4 1305,232.5 1303.1,238.6 1299.4,243.9 1297.5,250 1294.3,256 1292.5,262.5 1288,264.7 1284.1,268.1 1279.4,270 1275,272.5 1270.6,275.3 1266.1,278 1261.2,280 M1323.8,202.5 1323.9,208.3 1323.7,214.2 1323.8,220 1326.8,224.8 1331.3,228.3 1335,232.5 1336.2,238.3 1337.3,244.2 1338.8,250 1339.8,255 1339.4,260 1339.4,265 1340,270 1347.5,276.2 M1335,207.5 1336.7,212.5 1338,217.6 1340,222.5 1343,227.7 1347.3,232.1 1350,237.5 1352.7,242.2 1353.6,247.4 1355,252.5 1353.8,257.7 1351,262.3 1350,267.5 1344.7,270.9 1340,275 M1342.5,212.5 1345.5,217.3 1347.1,222.7 1350,227.5 1350.9,233.8 1352.5,240 M1365,237.5 1368.3,243.4 1370,250 1372.1,256.4 1375,262.5 1372.2,267.4 1370,272.5 1364.8,272.8 1360,275 M1345,177.5 1350.2,177.3 1354.7,174 1360,173.8 1363.9,177.1 1368.8,179 1372.5,182.5 1373.1,188.6 1376.9,193.9 1377.5,200 1377.5,205.1 1378.8,210.1 1380,215 1380.9,220.2 1382.3,225.3 1385,230 M1382.5,163.8 1386.5,168 1390,172.5 1393.4,177.5 1396.8,182.4 1400,187.5 1404.2,190.7 1408.5,194 1412.5,197.5 1417.5,202.5 M1402.5,152.5 1405,156.9 1406.9,161.6 1409.1,166.1 1412.5,170 1413,176.2 1412.5,182.5 1413.2,188.9 1415,195 1417.5,202.5 1414.6,208.6 1412.5,215 1409.7,219.8 1408.3,225.4 1405,230 1405.2,235.2 1403.6,240 1402.5,245 1402.5,252.5 M1412.5,172.5 1417.1,168.2 1422.7,165.3 1427.5,161.2 M1417.5,202.5 1421.9,199.5 1426.2,196.3 1430,192.5 1432.5,187.5 1435,182.5 1437.5,177.5 1439.8,172 1443.5,167.1 1445,161.2 M1472.5,217.5 1475,212.8 1476.2,207.6 1477.5,202.5 1479.7,197.7 1481.7,192.8 1482.5,187.5 1482.6,182.4 1484,177.5 1485.3,172.6 1485,167.5 1486.4,162.6 1486.4,157.5 1486.2,152.4 1487.5,147.5 M1462.5,222.5 1462.6,216.6 1464.6,210.9 1465,205 1464,199.9 1462.4,195 1461.2,190 1461.5,184.9 1463.7,180.1 1464.7,175.1 1465,170 1466.9,164.4 1468.8,158.8 1470.1,152.9 1472.5,147.5 1477,144 1482.5,142.5 1487.6,143.5 1492.5,145 1497.4,147.7 1502.9,149.2 1507.5,152.5 1510.7,157.9 1515,162.5 1518.8,167.2 1522.2,172.2 1525,177.5 1527.2,184.2 1527.5,191.2 1530.3,197.5 1535,202.5 1537,208.5 1539.2,214.5 1542.5,220 1544.8,225.5 1548.4,230.4 1550,236.2 1555.1,237.1 1560,238.8 1565,241.9 1570,245 1576.6,246.7 1582.5,250 1590,256.2 1591.6,261.3 1595.3,265.3 1597.5,270 M1492.5,145 1493.9,140.1 1492.6,134.9 1493.8,130 1495,121.2 M1493.8,140 1500.8,139.7 1507.5,137.5 1515,143.8 1519.6,146.8 1524.7,148.7 1530,150 1535,149.1 1540,150.2 1545,150 1550,157.5 1553.9,163.7 1557.5,170 1558.3,175.8 1560,181.6 1560,187.5 1563.1,192.2 1565.1,197.4 1567.5,202.5 1572.1,205.4 1575.9,209.1 1580,212.5 1585.1,215.5 1588.8,220 1592.7,224.5 1595,230 1593.7,234.9 1593.5,240 1592.5,245 1591.2,250.6 1590,256.2 M1542.5,121.2 1543.3,128.2 1545,135 1545.5,140.8 1548.2,146.1 1547.7,152.1 1550,157.5 M1597.5,160 1595.2,165.1 1591.7,169.6 1590,175 1587.6,180.6 1587.3,186.8 1585,192.5 1582.9,198.6 1582.5,205 1584.3,210.1 1587.6,214.6 1588.8,220 M1550,236.2 1543.5,238.9 1537.5,242.5 1532.9,246.4 1527.9,249.7 1522.5,252.5 1517.4,254.1 1512.5,256.2 1506.2,257.2 1500,256.2 1494.9,256.2 1490,257.5 1483.5,260.8 1477.5,265 1471.9,267.3 1465.7,267.1 1460,268.8 1455,268.1 1450,267.5 1444.9,268.5 1440,270 1435.2,267.8 1430,267.5 M1512.5,256.2 1512.8,250 1512.9,243.7 1512.5,237.5 1512.7,231.5 1510.2,225.9 1510,220 1513,214.4 1517.5,210 1512.5,203.8 M1490,257.5 1485.6,253 1482.5,247.5 1475,241.2 M1457.5,268.8 1458,262.5 1458,256.2 1458.8,250 M1457.5,268.8 1452.6,264.3 1447.5,260 1443.8,253.8 M1457.5,268.8 1453.7,272.5 1449.2,275.1 1444.5,277.4 1440,280 1435,285 M1457.5,268.8 1454.5,273.8 1450,277.5 1447.5,286.2 M1457.5,268.8 1456.1,275.6 1455,282.5 M1457.5,268.8 1459.9,273.8 1462.5,278.8 M1445,270 1438.8,266.2 1432.5,262.5 1428.8,253.8 1437.5,250 M1510,260 1509.1,265.1 1507.5,270 1503.3,274.4 1500,279.4 1497.5,285 1492.3,284.9 1487.4,286 1482.5,287.5 1478.2,290.7 1475,295 M1510,265 1511.3,270.1 1514.2,274.7 1515,280 1514.7,285 1514.2,290 1515,295 M1497.5,285 1501,290.2 1505,295 M1497.5,285 1494.7,290.4 1491,295.1 1487.5,300 M1485,267.5 1480.1,272.6 1475,277.5 1470.5,283.3 1467.5,290 M1420,280 1418.6,285.1 1417.2,290.2 1415,295 M1450,280 1447.2,284.9 1445.9,290.5 1442.5,295 M1422.5,290 1425.9,295.9 1427.5,302.5 M1597.5,260 1591.2,260.2 1585,260 1578.7,262.4 1572.5,265 1566.9,269.4 1562.5,275 1560.7,281.5 1557.5,287.5 1554.2,291.7 1550,295 M1532.5,287.5 1538.7,286.4 1545,286.2 1551.2,284.3 1557.5,282.5 M1597.5,270 1590,275 1586.8,279 1585.2,283.9 1582.3,288 1580,292.5 M1255,275 1248.9,279 1242.5,282.5 1239.3,286.8 1235.9,290.9 1232.5,295 M1211.2,246.2 1210.5,253.1 1210,260 1211.6,264.9 1211.2,270.1 1212.5,275 1214.6,279.9 1214.9,285.3 1217.5,290 M1218.8,250 1222.7,254.5 1225,260 1226,265 1227.5,269.9 1227.5,275 M1500,177.5 1505,181.2 1510,185 1516.5,187.6 1522.5,191.2 M1527.5,163.8 1528.1,169.2 1527.5,174.6 1527.5,180 1527,185.8 1525,191.2 M1435,128.8 1436.6,134.3 1440.9,138.4 1442.5,143.8 1450,145 M1425,128.8 1430,129.1 1435,128.8 1439.8,130.9 1445,131.2 1450,132.5 1454.9,134.6 1459.7,136.7 1465,137.5 M1407.5,142.5 1413.6,144.6 1420,145 1420.9,139.4 1423.5,134.2 1425,128.8 M1442.5,143.8 1444,148.7 1443.8,153.8 M1307.5,162.5 1312.5,158.2 1315.9,152.6 1320,147.5 M1330,121.2 1332.2,126.6 1332.5,132.5 M1472.5,121.2 1477.5,127.5 1481.1,131.4 1485,135 M1505,121.2 1506.4,126.5 1505.7,132.2 1507.5,137.5 M1555,131.2 1550.2,133.5 1545,135 M1575,275 1580,275 1585,275.1 1590,275 M1590,295 1588.3,289.6 1585,285 M1547.5,160 1555,157.5 M1360,357.5 1360.9,362.5 1361.4,367.5 1362.5,372.5 1362.1,377.5 1361.2,382.5 1362.8,389.1 1366.2,395 1367.5,402.5 1374.3,405.3 1380,410 1385.1,410.5 1390,408.8 1394.8,412.3 1400,415 1407.5,420 1415,422.5 1418.2,427.9 1422.5,432.5 1425.7,437.9 1430,442.5 1435,447.5 1439.2,450.8 1442.5,455 1445.8,459.2 1450,462.5 1454.8,465.3 1460,467.5 1464.8,465.5 1470,465 1475.4,463.2 1480,460 1487.5,462.5 1493.8,463.6 1500,465 1506.3,464.2 1512.5,462.5 1518.9,462.9 1525,465 1529.8,467.9 1535,470 1540,475 1544.2,478.5 1547.4,482.7 1550,487.5 M1360,357.5 1365,358.1 1370.1,358.7 1375,360 1381.5,358.8 1387.5,356.2 1392.5,354.2 1397.5,352.5 1402.5,351.3 1407.5,350 1413.7,352.6 1420,355 1425,362.5 1430.2,365.5 1434.8,369.4 1440,372.5 1445.9,375.8 1452.5,377.5 1458.6,375.3 1465,375 1471.2,376.4 1477.5,377.5 1481.2,381.3 1483.9,386 1487.5,390 1489.7,396.4 1492.5,402.5 1497,406.9 1500,412.5 1505.6,416.9 1510,422.5 1512.4,427.5 1515,432.5 1517.7,437.2 1521.2,441.2 1525,445 1529.5,450.5 1535,455 1542.5,460 1550,455 1553.1,448.3 1557.5,442.5 1556.3,437.6 1556,432.5 1555,427.5 1552.2,421.4 1550,415 1549.4,410 1550.9,405 1550.3,400 1549.8,395 1550,390 1547.5,385 1545.4,379.8 1542.5,375 1539.2,369.7 1535,365 1535.6,360 1535,355 1528.6,352.8 1522.5,350 1517.7,348.2 1512.6,347.8 1507.5,347.5 1501,344.2 1495,340 1488.6,339.5 1482.5,337.5 1477.5,338.9 1472.5,340 M1295,330 1300.4,331.7 1305.1,334.9 1310,337.5 1315.1,338.2 1320,340 1325.1,343.7 1330,347.5 1335.2,349.5 1339.6,353.2 1345,355 1349.9,357.6 1355,360 1360,365 M1360,357.5 1356.6,351.6 1355,345 1351.7,340.8 1347.5,337.5 1342.5,335 M1362.5,356.2 1366.7,350.9 1370,345 1375,340 1380.2,339.7 1385,337.5 1389.2,331.5 1392.5,325 1396.9,321.9 1400,317.5 1403.1,313.1 1407.5,310 1410.2,305.1 1412.5,300 1415,291.2 M1312.5,360 1318.2,361.7 1324.4,361.7 1330,363.8 1334.6,366.1 1338.2,369.8 1342.5,372.5 1348.9,375.9 1355,380 1362.5,385 M1287.5,387.5 1294.1,385.8 1300,382.5 1304.9,380.8 1310,380 1315,381.8 1320,383.8 1326.1,381.7 1332.5,381.2 1337.9,380.4 1342.5,377.5 1348.9,378 1355,380 M1293.8,371.2 1299.3,369.6 1305,368.8 1312.5,375 1316,379.6 1320,383.8 M1367.5,402.5 1361.6,405.9 1355,407.5 1351.1,411.1 1347.5,415 1344,419.5 1342.5,425 1340.3,430.2 1337.5,435 M1357.5,407.5 1361.7,413.5 1365,420 1365.4,425 1365.7,430 1366.2,435 M1380,410 1381.8,415.4 1385,420 1383.7,425 1382.5,430 M1385,385 1388.8,389.9 1392.5,395 1396.3,398.7 1400,402.5 1404.6,406.9 1407.5,412.5 1412.5,417.5 M1400,402.5 1405,395 1411.1,392.2 1417.5,390 1423.8,390.4 1430,388.8 M1392.5,395 1396.7,391.7 1400,387.5 1404.8,384.7 1410,382.5 1412.5,376.2 M1492.5,402.5 1486.2,401.8 1480,402.5 1474.9,402.5 1470.2,399.9 1465,400 1458.8,398.3 1452.5,397.5 1447.5,390 1443.4,386.6 1440,382.5 M1465,400 1463,395.2 1462.5,390 M1472.5,401.2 1473.3,394.3 1475,387.5 1472.6,382.5 1470,377.5 M1430,442.5 1425,446.2 1420,450 1415,450.1 1410,449.9 1405,450 1398.7,447.7 1392.5,445 1387.8,441.8 1382.5,440 M1405,450 1401.9,455.5 1397.5,460 1390,465 M1392.5,455 1385,460 M1435,447.5 1436.7,441.3 1437.5,435 1435,430 M1415,422.5 1419.7,419.4 1425.1,417.7 1430,415 1432.5,408.8 M1450,462.5 1453.1,456.5 1455,450 1460,442.5 1464.7,439.9 1470.2,439.9 1475,437.5 1476.6,443.7 1477.5,450 M1492.5,430 1494.1,434.9 1494.8,439.9 1495,445 1498.2,450.4 1502.5,455 1507.4,458.8 1512.5,462.5 M1500,430 1505.2,434.8 1510,440 1514.6,442.8 1517.8,447.4 1522.5,450 1528.6,452.8 1535,455 M1207.5,400 1200,395 M1232.5,437.5 1230.6,444 1227.5,450 1230,454.7 1230.5,460.1 1232.5,465 1231.1,471.2 1230,477.5 1232.2,483.9 1235,490 M1232.5,437.5 1238.4,434.1 1245,432.5 1251,429.3 1257.5,427.5 1261.1,423.6 1263.6,418.7 1267.5,415 1270.9,409.1 1272.5,402.5 1272,396.1 1270,390 1268,384.8 1265,380 M1257.5,427.5 1262.5,428.2 1267.5,429.3 1272.5,430 1277.5,431 1282.5,431.9 1287.5,432.5 1292.2,435.6 1297.5,437.5 M1245,432.5 1247.1,426.4 1247.5,420 1245.8,415 1244.3,410 1242.5,405 1243.9,399.9 1245,394.7 1247.5,390 1245.9,383.8 1245,377.5 M1272.5,402.5 1278.7,405.1 1285,407.5 M1257.5,427.5 1259.5,434 1262.5,440 M1262.5,305 1263.6,310 1263.3,315.1 1265,320 1266.9,324.9 1268.9,329.8 1270,335 1268.1,341.1 1267.5,347.5 1270,355 M1262.5,305 1256.5,308.1 1250,310 1243.5,311.9 1237.5,315 1230,317.5 M1260,327.5 1255.2,332.7 1250,337.5 1245.4,340.3 1241.9,344.4 1237.5,347.5 1231.6,350.9 1225,352.5 M1260,327.5 1252.5,325 1247.6,327.7 1242.5,330 M1252.5,342.5 1250.7,349 1247.5,355 1252.5,362.5 M1266.2,291.2 1275,295 1280.8,296 1286.8,296 1292.5,297.5 1296.9,302.1 1302.5,305 1307,308.7 1312.5,310.8 1317.5,313.8 1321.5,317 1326.2,319.1 1330,322.5 1335.3,324.5 1340,327.5 M1292.5,297.5 1297.4,295.9 1302.5,296.1 1307.5,295 1313.7,293.7 1320,293.8 M1275,295 1275.7,300.3 1278.4,305 1280,310 M1302.5,305 1302.8,311.4 1305,317.5 M1200,322.5 1207.5,317.5 1211.8,314.3 1215,310 1218.9,305.6 1223.8,302.1 1227.5,297.5 1233,295.2 1237.5,291.2 M1200,300 1204.8,302.9 1210,305 1213,310.5 1217.5,315 M1200,440 1202,435.3 1205.2,431.3 1208.4,427.4 1210,422.5 1212.8,416.4 1215,410 1222.5,407.5 M1200,400 1204.4,394.4 1210,390 1211.5,385.1 1212.5,380.1 1212.5,375 M1257.5,450 1265,455 1266.3,459.9 1266.8,465 1267.5,470 1268,475 1269.6,479.9 1269.4,485 1270,490 M1265,455 1270.2,454.7 1275,452.5 M1267.5,470 1272.9,466.8 1277.5,462.5 1283.5,459.4 1290,457.5 1294.4,454.4 1297.5,450 M1340,445 1335,441.3 1330,437.5 1327.2,443.6 1325,450 1324.1,455 1323.3,459.9 1322.2,464.9 1322.5,470 1322.6,475.1 1324.5,479.9 1325,484.9 1325,490 M1330,437.5 1330,430 M1307.5,450 1306.4,455.2 1305,460.3 1302.5,465 1300.9,471.2 1300,477.5 1303,483.5 1305,490 M1550,487.5 1554.8,489.6 1560,490 M1540,475 1536.9,479.7 1535,485 1528.7,487.3 1522.5,490 M1545,480 1540.8,474 1537.5,467.5 1533.2,464.3 1530,460 M1425,317.5 1422.9,322.4 1422.3,327.7 1420,332.5 1419.2,337.8 1417,342.6 1415,347.5 1407.5,350 M1425,291.2 1425.3,298.3 1427.5,305 1426.9,311.4 1425,317.5 1430.3,315.6 1435,312.5 1441.3,308.8 1447.5,305 1452.1,300.6 1455,295 M1420,332.5 1413.7,333.7 1407.5,335 M1450,297.5 1449,302.8 1446.1,307.4 1444.6,312.6 1442.5,317.5 1440.8,323.2 1440.6,329.1 1440,335 1436.2,338.7 1432.5,342.5 1427.5,350 1422.5,355 M1440,335 1447.5,337.5 M1465,320 1471.8,322.9 1477.5,327.5 1480.8,332.1 1482.5,337.5 M1491.2,313.8 1488.2,317.9 1487,322.9 1485,327.5 1477.5,327.5 M1502.5,320 1499.8,324.7 1499.3,330.2 1496.2,334.8 1495,340 M1537.5,297.5 1539.9,302.6 1542.3,307.6 1545,312.5 1550,320 1547.5,327.5 1545.1,333.8 1542.5,340 1539.7,344.9 1537.6,350 1535,355 M1550,320 1555.4,321.6 1560,325 M1547.5,327.5 1552.1,321.7 1555,315 1557,309.7 1560,305 1563.8,301.3 1567.5,297.5 1575,291.2 M1472.5,340 1469.8,344.9 1466.9,349.7 1465,355 1461.7,360.3 1457.5,365 1454.2,370.9 1452.5,377.5 M1472.5,351.2 1465,355 M1597.5,320 1591.3,321.6 1585,322.5 1579.9,323.2 1575,325 M1572.5,305 1571.9,310 1571,315 1570,320 1575,325 M1510,390 1511.3,396.2 1512.5,402.5 1510,410 1512.5,415 1515,420 M1535,400 1535,405 1535.7,410 1535,415 1536.5,420.5 1540,425 1539.9,430.1 1541.1,435.1 1542.5,440 1540.9,444.9 1541.9,450.2 1540,455 M1500,400 1506.2,401.6 1512.5,402.5 M1522.5,350 1518.9,344.9 1515,340 1510,335 M1550,352.5 1547.5,360 M1457.5,440 1456.9,445.2 1455,450 1454.3,455 1452.9,459.9 1452.5,465 1460,467.5 M1407.5,470 1415,465 1420,472.5 M1487.5,465 1485,470 M1225,375 1226.2,380 1227.5,385 1225.9,390.5 1222.5,395 1215,400 1207.5,400 M1222.5,365 1223.6,370 1225,375 1229,371.5 1232.5,367.5 M1217.5,460 1225,457.5 1227.5,450 M1490,291.2 1492.5,300 1488.8,303.8 1485,307.5 M1505,291.2 1505.5,297 1507.5,302.5 1502.5,310 M1515,291.2 1518.2,295.2 1520,300 M1340,327.5 1343.6,332.6 1347.5,337.5 M1365,332.5 1361.4,336.4 1357.5,340 1352.5,347.5 M906.2,358 913.8,362.5 917.5,370 922.5,377.5 926.2,381.2 M1023.8,300 1023.7,305.1 1024.1,310.1 1026.3,314.9 1026.2,320 1027.3,325.6 1027.5,331.2 1028.9,336.8 1028.8,342.5 1028.4,348.5 1025.7,354.1 1025,360 1022.2,366.4 1018.8,372.5 1017.8,378.3 1017,384.1 1017.5,390 1016.2,395 M1005,302.5 1012.5,306.2 1018.1,306.7 1023.8,306.2 M1042.5,315 1035,320 1027,321.2 M1003.8,332.5 1009.1,335.4 1015,336.2 1021.3,335.9 1027.5,337.5 M1007.5,347.5 1012.8,349.4 1017.5,352.5 1026.2,351.2 M1037.5,326.2 1030,328.8 1027.5,327.5 M1035,352.5 1027.5,351.2 M1011.2,357.5 1020,361.2 M1115,307.5 1122.5,308.8 1123.4,314.5 1125,320 1123.1,324.8 1122.4,329.8 1122.5,335 1122.7,340.1 1121.4,345 1120,349.9 1120,355 1122.8,361.1 1125,367.5 1127.2,372 1130,376.2 1130.1,382.5 1131.8,388.7 1131.2,395 1131.2,400.9 1129.5,406.6 1128.8,412.5 1127.6,418.7 1125.5,424.5 1122.5,430 1121,434.9 1120,440 1115.5,443 1111.6,446.6 1107.5,450 1105.9,455.5 1102.5,460 1100,467.5 M1100,318.8 1105,317.9 1110,317.5 1114.9,318.7 1120.1,318.6 1125,320 M1145,320 1138.7,320.2 1132.5,318.8 1125,320 M1131.2,395 1137.5,400 1141.2,397.5 M1115,395 1120,402.5 1124.9,404.1 1128.8,407.5 M1110,415 1113.7,420.1 1117.5,425 1122.5,430 M1090,425 1095,430 1096.7,434.9 1097.1,439.9 1097.5,445 1099.1,450.4 1102.5,455 M1107.5,400 1107.3,405.3 1105,410 1101.6,414.5 1099.2,419.6 1097.5,425 1095,430 M1128.8,412.5 1123.3,414.4 1117.5,415 M1145,405 1143.9,410.2 1142.5,415.3 1140,420 1135.1,425.1 1130,430 1125.4,434.4 1122.5,440 1120,440 M1170,365 1168.6,369.9 1168.3,375 1167.5,380 1165.2,385.1 1162.5,390 1160.6,396.5 1157.5,402.5 1156.5,408.5 1153.4,413.9 1152.5,420 1151.6,425 1150.3,429.9 1150,435 M1162.5,370 1168.8,372.5 M1177.5,370 1172.8,372.6 1168.8,376.2 M1175,387.5 1169.3,388.1 1163.8,390 M1182.5,291.2 1180.3,298.2 1177.5,305 1175.6,311.5 1172.5,317.5 1170.5,322.3 1170,327.5 1167,332.3 1165,337.5 1162.8,342.3 1162.5,347.5 1167.5,352.5 1172.5,354.9 1177.5,357.5 M1158.8,312.5 1163.2,309.7 1168.1,307.8 1172.5,305 1176.3,300.8 1179.6,296.1 1182.5,291.2 M1172.5,317.5 1178.5,320.6 1185,322.5 1190.1,324.9 1195,327.5 M1165,337.5 1170,338.6 1175,340 1179.4,343.1 1182.5,347.5 1185,352.5 M1205,325 1202.1,331.8 1197.5,337.5 1195.7,342.4 1195,347.5 M1190,365 1191.6,370.5 1195,375 1197.5,380 1200,385 1200.7,390 1201.2,395.1 1202.5,400 1199.4,406 1197.5,412.5 1197.2,417.7 1195,422.5 M1205,355 1200.5,359.4 1197.5,365 1195.3,369.8 1195,375 M1210,395 1202.5,400 M1177.5,395 1181.9,399.5 1185,405 1189.7,410.3 1195,415 M1182.5,387.5 1183.2,393.4 1185,399 1185,405 M1207.5,440 1206.4,445 1205.6,450.1 1202.9,454.8 1202.5,460 1200.9,465.1 1199.2,470.2 1196.3,474.8 1195,480 1194.2,485.1 1192.5,490 M1077.5,440 1072.8,437.3 1069.5,432.9 1065,430 1058.3,428.5 1052.5,425 1046.2,424.2 1040,422.5 1035.1,424.3 1030,425 1024.8,426 1020,428.3 1015,430 M1065,430 1061.6,435.3 1057.5,440 1051.4,441.8 1045,442.5 1040.2,440.3 1035,440 1029.9,440.4 1025.1,442 1020,442.5 1013.2,441.2 1006.2,441.2 M1075,450 1069.9,450 1064.9,451 1060,452.5 1054.8,452 1050,450 1045.1,452.1 1039.9,453.1 1035,455 1028.7,453.8 1022.5,452.5 1017.5,455 M1060,452.5 1059.1,457.6 1057.5,462.5 1052.5,463.9 1047.5,465 1041.3,463.6 1035,462.5 1028.8,463.9 1022.5,465 1013.8,462.5 M1085,465 1080,465.3 1075,465 1070,467.5 1065,470 1059.9,472.3 1055,475 1052.5,480 M1047.5,465 1043.3,468.3 1040,472.5 1034.7,474.3 1030,477.5 M1057.5,440 1055,432.5 M1080,465 1082.2,469.8 1082.5,475 1080.7,479.9 1080,485 M1067.5,475 1072.5,482.5 M1012.5,397.5 1017.6,400.4 1022.5,403.8 1028.7,402.7 1035,402.5 1041.3,404.3 1047.5,406.2 1051.9,411.3 1057.5,415 1062.8,419.7 1067.5,425 1070.1,429.9 1072.5,435 M1135,291.2 1142.5,290 1146.2,296.2 M1100,467.5 1097.5,475 1095,480 M1090,462.5 1095,470 M1131.2,450 1127.8,456.1 1125,462.5 1122.1,467.3 1120,472.5 M1050,121.2 1055.6,122.9 1061.5,123.6 1067.2,124.9 1072.5,127.5 1076.8,132.8 1080,138.8 1086.2,145 1085.8,150.2 1083.8,155 1085,161.2 1090,162 1095,162.5 1100.6,163.7 1106.2,165 1110.4,167.9 1115,170 1120,171.2 1123.9,176.1 1128.8,180 1134,182.7 1139.5,184.5 1145,186.2 1149.8,188.8 1153.8,192.5 1160,191.2 1162.3,195.9 1165,200.4 1167.5,205 1171.3,210 1175,215 1180,216.8 1184.9,218.5 1190,220 1195,223.7 1200,227.5 1206.2,230 M997,188.8 1005,187.5 1009.6,184.1 1015.2,182.9 1020,180 1024.9,178.3 1030.1,178.9 1035,177.5 1041.3,178.5 1047.5,179.5 1053,176.3 1059,174.4 1065,172.5 1069.9,170.5 1075,168.8 1077.5,163.8 1083.8,158.8 M1192.5,230 1189,234 1185,237.5 1180.2,242.7 1175,247.5 1173,253.9 1170,260 1164.7,263.4 1160,267.5 1156.6,272.4 1151.4,275.5 1147.5,280 1142.7,284 1137.5,287.5 1135.5,292.8 1132.5,297.5 M1165,265 1167.2,269.8 1167.5,275 1165,283.8 M1167.5,270 1173.8,275 M1138.8,287.5 1142,292.8 1146.2,297.5 M1206.2,240 1203.2,245.5 1198.1,249.5 1195,255 1193.5,259.9 1193.1,265.2 1190.7,269.9 1190,275 1187.9,279.9 1185.6,284.7 1184.1,289.9 1182.5,295 M1187.5,275 1189.6,279.9 1192.1,284.7 1193,290.1 1195,295 M588,120 588.6,125.6 589,131.2 593.3,135.5 598.2,139.2 602.9,143 607.5,147 613.8,146 617.7,150.1 622.5,153 631.2,152 636.3,148.6 642,146.2 651.2,145 657,148 663.8,150 667.5,146 672.5,147 680,142 684.5,145.9 690,148 695,150.8 700,153.5 706.2,153.5 710.1,150 715,148 719.1,144.4 722.5,140 728.4,135.5 735,132 741.2,128 747.5,121.2 M737.5,490 742.3,488.1 747.4,487.9 752.5,487.5 756.6,484.1 760,480 765,477.5 M1208.8,242.8 1210.7,235.9 1212.2,232 M1244.7,266.2 1238.1,268.7 1233.9,270.7 M1253.3,272.5 1253.5,264.7 1254.7,260 M1309.4,281.2 1306,285.8 1303.3,288.9 M1376.7,287.5 1371,286.4 1367.5,285 M1406.6,251.3 1402.8,259 1400.9,263.4 M1432.7,231 1427.8,233.1 1422.7,234.6 1416.7,237.6 M1439.7,225.5 1439.4,231.5 1439.5,235 M1465.9,220.8 1465.4,226.1 1465,231.4 1463.3,237.8 M1220.7,242.7 1221.4,248.1 1220.7,253.6 1222.3,260 M1229.8,229.5 1231.1,235.7 1231.5,239.3 M1259.7,194.4 1259.3,199.6 1258.3,204.7 1257.3,211 M1349.2,204.2 1350.7,198.9 1352.8,193.8 1354.9,188.2 M1385.4,237.2 1378.6,234.2 1374.9,233.2 M1255.3,170.3 1252.7,165.8 1250.6,162.9 M1286.4,153.5 1279.4,157.7 1274.8,159.9 M1298.3,157.2 1297.7,149.1 1296.9,144.4 M1326.2,146 1322.8,151.9 1319.9,155.9 M1355.1,152.2 1358.2,156.2 1360.9,160.5 1365.5,165.7 M1363.7,127.2 1368.9,133.3 1371.4,137.6 M1378.6,129.9 1382.1,121.1 1384.1,115.7 M1278.5,208.8 1282.2,212.3 1286,215.7 1291.3,220.4 M1268.7,272.7 1268,263.1 1268.5,257.4 M1294.4,257.9 1292.4,252.8 1290.5,250.1 M1268.8,275.8 1268.9,269.4 1268.4,265.5 M1323.8,208.4 1318.8,205.5 1315.7,204.4 M1339.3,257.5 1333.2,252.6 1330.1,250.1 M1353.1,258.2 1358,256.2 1363.3,256.2 1369.4,255.6 M1354.9,175.1 1349,167.3 1344.6,162.1 M1364.7,177.1 1357.7,178.6 1353.4,179.1 M1374.6,189.7 1376.9,184.3 1378.3,180.8 M1381.9,220.6 1384.6,211.8 1385.1,206.4 M1395.9,181.3 1397.8,176 1399.5,173 M1413.9,189.4 1409.3,188.5 1406.7,188.3 M1403.3,240.1 1400.4,236.2 1398.5,234.1 M1442.5,166.7 1445.1,170 1446.4,171.6 M1483.4,180.1 1486.1,185.3 1487.6,188.6 M1486.2,158.2 1478.8,163.7 1473.9,167.6 M1462.4,183.7 1467.4,186.9 1470.8,188.9 M1488.1,143.9 1482.5,147.8 1479.8,150.4 M1497.2,147.3 1491,152.6 1487.2,155.8 M1512.7,159.5 1513.7,154.3 1514.9,149.2 1516.2,142.9 M1526.3,184.6 1532.2,179.3 1535.3,176.4 M1532.5,198.7 1525.4,197.1 1521.5,195.3 M1564.1,241.4 1562.7,236.3 1560,231.8 1557.4,226 M1577.6,248 1571.4,251 1567.8,252.2 M1510.4,139.9 1510.6,131.6 1511.9,126.7 M1558.3,175.7 1549.8,171.7 1544.5,170.2 M1575.6,209 1567.6,213.4 1562.8,214.8 M1588.1,181.8 1596.4,180.5 1601.5,179.9 M1585.2,211.4 1579.5,209 1576.4,207.6 M1533,245.5 1542.6,246.9 1548.4,246.5 M1508.4,256.2 1512,252.1 1514,247 1518.5,242.5 M1443.4,269.2 1449.9,276.3 1453.6,280.2 M1435.4,268.8 1439.7,264.6 1442.4,262.7 M1510.9,226 1507.9,230.6 1503.6,233.9 1500.2,237.7 M1515.2,213 1510.9,212 1508.3,211.1 M1454.5,272.2 1450.7,264.2 1447.8,259 M1449.1,280.6 1452.6,278.3 1454.8,276.9 M1438.7,266.2 1445.7,265.5 1450,264.7 M1434.3,251.4 1429,247.8 1425.6,244.9 M1489.1,286.4 1492.3,282.5 1495.3,278.5 1498,273.4 M1515,287.9 1522,283.6 1525.9,280.8 M1417.9,286.2 1425.1,284.7 1429.4,284.1 M1446.9,286.2 1444.7,281.4 1443.5,276.3 1442,270.9 M1425.1,296.4 1420,294.8 1416.8,294 M1560.6,279.8 1555.9,273.9 1552.6,270.1 M1554,291 1555,282.3 1555.9,277.1 M1548.8,285.1 1542,278.1 1537.4,274 M1593.1,273 1600.7,274.5 1605.2,276.3 M1585.7,282.5 1583.9,277.4 1582.2,274.4 M1248.2,279.1 1248.9,275.1 1249.5,272.6 M1237,289.4 1237,284.8 1237.4,282.1 M1211.1,266.7 1215.1,262.5 1217.3,259.8 M1215.4,283.7 1217.7,279.1 1218.8,274 1219.8,268.2 M1505.3,181.5 1504.3,176.1 1503.5,170.6 1501.8,164.2 M1527.5,170.2 1531.3,166.5 1533,163.8 M1526.5,184.4 1531.5,183 1534.5,182.4 M1444,131 1440.4,122.8 1438.1,117.7 M1457.1,134.9 1451.2,137.8 1448,139.9 M1586.8,288.5 1591.1,288.5 1593.7,289 M1446.4,458.9 1445.1,449.9 1444.1,444.6 M1518.7,463.7 1511.6,467.2 1507.1,469.5 M1543.1,478.9 1537.4,478.9 1534,479 M1370.3,359.2 1367.5,351.1 1366.2,346.1 M1383.2,357.5 1380.2,353.8 1378.4,351.5 M1447.3,375.4 1439.8,380.2 1434.8,382.3 M1490.4,397.4 1485.1,397 1481.9,397.4 M1504.5,417 1499.1,416.9 1493.7,417 1487.2,416.4 M1513.1,428.6 1517.5,421.8 1520.8,417.6 M1555.1,446.5 1545.3,447.1 1539.4,446.6 M1550,406.1 1547,410.1 1543.5,413.8 1540.1,418.3 M1547.7,385.4 1553,388.4 1556.4,390.8 M1515.7,348.9 1518.2,352.4 1520.1,354.4 M1491.2,339.2 1497.2,336.7 1501.1,335.5 M1323.3,342.5 1319.3,344.4 1316.8,345.3 M1379.2,338.9 1373.1,333.8 1369.6,331.6 M1409.4,306.1 1410.8,312.8 1410.7,316.9 M1315.5,382.1 1311.1,384.8 1308.3,386.8 M1324.9,382.8 1321.5,387 1317.7,390.9 1313.8,395.7 M1351.9,410.6 1352,401 1352.5,395.4 M1344.3,421.4 1353.2,419.7 1358.6,419.6 M1339.1,431.7 1344.4,428.9 1347.3,427.6 M1387.9,388.9 1389.2,382.2 1390.6,378.4 M1394.9,397.4 1389.7,398.7 1386.7,398.9 M1410,393 1403.8,391.4 1399.9,390.6 M1473.6,401.4 1477.8,408.2 1480.3,412 M1457.9,398.6 1464.1,391.4 1468,386.4 M1443,385.5 1449.1,385.9 1452.8,386.9 M1396.3,446.5 1400.4,454.6 1403,459.4 M1392.8,463.1 1395.2,456 1396.9,452.1 M1506.9,458.3 1509.2,449.8 1511.4,444.6 M1504.8,434.8 1507.4,426.7 1507.7,421.8 M1531,453.4 1523.9,460.2 1519.4,463.2 M1230.3,442.9 1235.5,441.8 1240.6,440.6 1246.8,440.6 M1230.8,459.8 1225.7,459.1 1222.9,458.4 M1263.4,420.1 1265.1,424.7 1266.3,427.6 M1291.6,434.6 1291.2,425.2 1290.3,419.6 M1246,382.6 1241.5,385.8 1239,388 M1280.1,405.5 1279.4,400.5 1279.1,397.5 M1245.6,311.8 1247.8,304.3 1250.1,299.9 M1246.1,328.2 1250.3,319.4 1252.3,314.6 M1250,348.7 1255.5,347.3 1258.8,347.2 M1286.1,296.6 1280.9,300.4 1277.3,302.6 M1303.6,310.4 1310.8,303.5 1315.3,299.1 M1219.2,305.8 1218.2,313.2 1218.3,317.7 M1204.1,302.1 1197.2,303.1 1193.1,304.3 M1261.8,452.8 1263,444.5 1264.7,439.5 M1268.6,454.1 1263,451.7 1259.4,450.5 M1294.7,452.8 1296.9,459.3 1298.5,463.3 M1327.7,443.2 1324.7,440.3 1323.2,438.3 M1304.3,459.7 1308.5,456.5 1310.5,454 M1301.4,470.6 1297.3,462.8 1293.9,457.8 M1303.1,485.3 1308.2,479 1311,474.7 M1553,488.3 1551.3,483.3 1547.8,479.4 1545.5,474.2 M1538.5,478.1 1535.2,472.2 1532.9,469.2 M1533.8,463.8 1539.3,464.2 1542.7,464.5 M1443.4,307.4 1443.6,313.6 1443.1,317.2 M1445.4,309.8 1442.5,306.9 1440.7,305.6 M1441.2,326.8 1448.5,324.5 1453,323.9 M1437.4,337.6 1442.7,338.4 1448,337.2 1454.3,336.2 M1429.9,346.4 1436.9,345.7 1441,344.8 M1498.1,331.8 1501.9,329.3 1503.8,328.3 M1540,345 1536.2,337.7 1534.3,333 M1467.5,349.9 1472.5,348.6 1477.5,347.2 1483.7,346.5 M1590.6,321.4 1596.4,314.3 1599.7,309.9 M1571.7,310.1 1567.8,306.1 1563.3,302.9 1558.1,297.9 M1535,405.3 1540.3,398.5 1543.8,394.2 M1537.1,419.1 1530.7,418.3 1526.9,417.9 M1541.7,444.7 1538,440.4 1535.9,438 M1456.6,443.5 1453.2,440.6 1450.8,439 M1454.1,455.3 1450.9,451.2 1449,446.4 1446.2,440.7 M1410.7,467.8 1410.6,476.7 1409.4,482 M1226.4,380.4 1221.2,377.1 1217.9,375.2 M1225.2,389.6 1221.4,380.4 1218.9,374.8 M1219.6,396.9 1225.1,399.4 1228.3,401.2 M1343.5,332.2 1338.2,332.6 1335.1,332.1 M1039.9,316.7 1040.7,311.4 1040.6,308.4 M1009.4,334.3 1007.4,327.8 1005.7,324.2 M1016.3,359.7 1013.9,350.5 1011.4,344.8 M1123.8,327 1119.9,323.6 1116.1,320.1 1110.8,315.3 M1121.4,343.8 1118.2,340.1 1116,337.5 M1122.5,361.2 1126.8,356.5 1128.7,353.2 M1120.8,436.8 1126.4,433.2 1129.6,431.3 M1099.7,449.4 1102.2,442.4 1102.8,438.6 M1154.7,412.5 1153.2,407.6 1150.5,403.3 1147.2,398.3 M1151.7,424.7 1146,416.8 1143,411.8 M1174.3,313 1181.3,311.5 1185.2,310.5 M1171.2,322.6 1167.8,314.7 1164.8,310 M1163.7,342.8 1160.3,338.7 1157.8,336.4 M1172.5,355 1171.6,348.3 1170.4,344.5 M1164.6,309.4 1155.9,306.3 1150.7,304.3 M1178.9,320.1 1178.1,312.3 1177,307.7 M1202.5,358.3 1209.7,358.3 1214.1,358.1 M1195.8,371.7 1205.1,370.2 1210.6,370.4 M1198.4,470.9 1207.4,469.6 1212.8,469 M1046.5,423.8 1053.2,419.2 1057.5,416.7 M1029,453.8 1031.2,458.4 1032.9,463.2 1036.3,469.2 M1052.1,463.8 1053,459.2 1054,456.5 M1039.5,463.4 1043.1,461.3 1045.1,460.2 M1079.7,465 1087.9,459.3 1092.4,455.8 M1070.4,479.3 1073.3,472.6 1075.1,468.5 M1028.5,403.2 1024.2,407.9 1021.9,410.7 M1053,411.1 1053.7,403.1 1054.4,398.3 M1070.8,431.6 1065.8,429.1 1062.5,427.6 M1085.4,148.3 1091.1,144.5 1094.9,141.7 M1162.4,195.7 1166.5,186.8 1168.4,181.9 M1194.5,223.4 1195.3,216.3 1195.3,212.3 M1171.6,256.1 1170.4,250.7 1168.9,245.4 1167.2,239 M1151.5,276 1149.8,271.5 1148.4,269.1 M1166.2,269.8 1169.2,263.5 1171.2,259.5 M1143.6,294 1137.4,294.3 1133.6,294 M1187.7,281.1 1191.8,280.9 1194.2,280.6" fill="none" stroke="#8dcbe7" stroke-width="1.100" stroke-linejoin="round" stroke-linecap="round"/>
<path d="M1148.8,435 1147.5,445 1142.5,457.5 1135,465 1125,472.5 1117.5,482.5" fill="none" stroke="#a6d6ee" stroke-width="2.200" stroke-linejoin="round"/>
<g fill="none" stroke-linejoin="round" stroke-linecap="round">
<path d="M755,490 770,477.5 792.5,455 795,442.5 807.5,440.8 820,437.5 830,430 840,415 850,405 860,398.8 867.5,393.8 866.2,385 867.5,377.5 870,376.2 M860,400 866.2,395 867.5,380 872.5,376.2 875,381.2 885,385 890,392.5 897.5,397.5 910,387.5 921.2,379.5 927.5,384.5 940,388 947.5,395 953.8,398.8 958.8,397.5 963.8,403.8 972.5,407 985,402.5 1000,397 1010,394.5 1020,397.5 1032.5,400 1042.5,400 1055,405.5 1065,415 1072.5,426.2 1077.5,440 1077.5,450 1085,460 1095,470 1097.5,490 M1152.5,490 1158.8,488.8 1165,490" stroke="#e9962c" stroke-width="3"/>
<path d="M755,490 770,477.5 792.5,455 795,442.5 807.5,440.8 820,437.5 830,430 840,415 850,405 860,398.8 867.5,393.8 866.2,385 867.5,377.5 870,376.2 M860,400 866.2,395 867.5,380 872.5,376.2 875,381.2 885,385 890,392.5 897.5,397.5 910,387.5 921.2,379.5 927.5,384.5 940,388 947.5,395 953.8,398.8 958.8,397.5 963.8,403.8 972.5,407 985,402.5 1000,397 1010,394.5 1020,397.5 1032.5,400 1042.5,400 1055,405.5 1065,415 1072.5,426.2 1077.5,440 1077.5,450 1085,460 1095,470 1097.5,490 M1152.5,490 1158.8,488.8 1165,490" stroke="#fcbc55" stroke-width="1.300"/>
</g>
<!-- car -->
<g transform="translate(1102.500,475)"><rect x="0" y="0" width="13.500" height="16" rx="3.500" fill="#c62d2d" stroke="#7a1616" stroke-width=".8"/><rect x="2" y="5" width="9.500" height="5.500" rx="1" fill="#24303a"/><rect x="6" y="6" width="4" height="3" fill="#3f7a4a"/><rect x="1.500" y="12.500" width="10.500" height="3" fill="#f1d9d9"/></g>
<!-- nav controls -->
<rect x="510" y="268" width="10" height="176" rx="5" fill="#7a8566"/>
<g transform="translate(515,167.5)"><circle r="12" fill="url(#gb)" stroke="#fff" stroke-width="1.600"/><circle r="12.800" fill="none" stroke="rgba(90,100,70,.35)" stroke-width=".8"/><path d="M-5,2.500 L0,-2.500 L5,2.500" fill="none" stroke="#fff" stroke-width="2.600" stroke-linecap="round" stroke-linejoin="round"/></g>
<g transform="translate(501,195)"><circle r="12" fill="url(#gb)" stroke="#fff" stroke-width="1.600"/><circle r="12.800" fill="none" stroke="rgba(90,100,70,.35)" stroke-width=".8"/><path d="M2.500,-5 L-2.500,0 L2.500,5" fill="none" stroke="#fff" stroke-width="2.600" stroke-linecap="round" stroke-linejoin="round"/></g>
<g transform="translate(528.5,195)"><circle r="12" fill="url(#gb)" stroke="#fff" stroke-width="1.600"/><circle r="12.800" fill="none" stroke="rgba(90,100,70,.35)" stroke-width=".8"/><path d="M-2.500,-5 L2.500,0 L-2.500,5" fill="none" stroke="#fff" stroke-width="2.600" stroke-linecap="round" stroke-linejoin="round"/></g>
<g transform="translate(515,222)"><circle r="12" fill="url(#gb)" stroke="#fff" stroke-width="1.600"/><circle r="12.800" fill="none" stroke="rgba(90,100,70,.35)" stroke-width=".8"/><path d="M-5,-2.500 L0,2.500 L5,-2.500" fill="none" stroke="#fff" stroke-width="2.600" stroke-linecap="round" stroke-linejoin="round"/></g>
<g transform="translate(515,253.5)"><circle r="12" fill="url(#gb)" stroke="#fff" stroke-width="1.600"/><circle r="12.800" fill="none" stroke="rgba(90,100,70,.35)" stroke-width=".8"/><path d="M-6,0 H6 M0,-6 V6" fill="none" stroke="#fff" stroke-width="2.600" stroke-linecap="round" stroke-linejoin="round"/></g>
<!-- scale -->
<g fill="none" stroke="#000" stroke-width="2"><path d="M483,424 V458 M482,441 H576 M575,424 V441 M558,441 V458"/></g>
<text x="529" y="437" text-anchor="middle" font-family="DejaVu Sans,sans-serif" font-weight="bold" font-size="13.500" fill="#000">10 km</text>
<text x="520" y="455.500" text-anchor="middle" font-family="DejaVu Sans,sans-serif" font-weight="bold" font-size="13.500" fill="#000">5 mi</text>
<text x="482" y="472.500" font-family="DejaVu Sans,sans-serif" font-weight="bold" font-size="13.800" fill="#000">© 2Gis contributors</text>
<circle cx="514.500" cy="361" r="10" fill="url(#gh)" stroke="#b9b9b9" stroke-width=".8"/>
<g transform="translate(515,456)"><circle r="12" fill="url(#gb)" stroke="#fff" stroke-width="1.600"/><circle r="12.800" fill="none" stroke="rgba(90,100,70,.35)" stroke-width=".8"/><path d="M-6,0 H6" fill="none" stroke="#fff" stroke-width="2.600" stroke-linecap="round" stroke-linejoin="round"/></g>
<!-- google -->
<g font-family="Liberation Sans,sans-serif" font-size="18.500" stroke="#fff" stroke-width="2.600" paint-order="stroke" stroke-linejoin="round"><text x="477.500" y="483.800" letter-spacing=".55"><tspan fill="#4285f4">G</tspan><tspan fill="#ea4335">o</tspan><tspan fill="#fbbc05">o</tspan><tspan fill="#4285f4">g</tspan><tspan fill="#34a853">l</tspan><tspan fill="#ea4335">e</tspan></text></g><g font-family="Liberation Sans,sans-serif" font-size="18.500" stroke-width=".55"><text x="477.500" y="483.800" letter-spacing=".55"><tspan fill="#4285f4" stroke="#4285f4">G</tspan><tspan fill="#ea4335" stroke="#ea4335">o</tspan><tspan fill="#fbbc05" stroke="#fbbc05">o</tspan><tspan fill="#4285f4" stroke="#4285f4">g</tspan><tspan fill="#34a853" stroke="#34a853">l</tspan><tspan fill="#ea4335" stroke="#ea4335">e</tspan></text></g>
<text x="594" y="487.500" font-family="Liberation Sans,sans-serif" font-size="14" fill="#444">Условия использования</text>
<text x="1594.500" y="486.500" text-anchor="end" font-family="DejaVu Sans,sans-serif" font-weight="bold" font-size="14.300" fill="#000">N 43° 23.6265' : E 133° 20.0373'</text>
<!-- wialon logo -->
<circle cx="1571.400" cy="149.400" r="20" fill="url(#glow)"/>
<g transform="translate(1571.400,149.400)"><path d="M2,-10.700 C-3,-11.800 -9,-7.500 -11.100,-0.600 C-11.500,1 -11.300,2.800 -10.800,3.900 C-10.300,0 -8.300,-3.500 -5,-5.600 C-3.200,-6.800 -1.200,-7 1.800,-7.600 C3.800,-8.200 3.600,-10.400 2,-10.700 Z" fill="#f0244e"/><path d="M-10.300,5 C-10.500,7 -7.500,10 -3,11.300 C1,12.300 6,11 9.200,8.200 C6,9.300 1,9 -2.500,7.600 C-5,6.500 -6.500,4.500 -7.800,3.600 C-9,3 -10.200,3.800 -10.300,5 Z" fill="#f0244e"/><path d="M1.700,-11.100 C6,-9.500 9.500,-5 10.800,0 C11.600,3 11.300,5.500 9.900,7.100 C8.800,8 7,7.200 6.900,5.600 C7.800,2 7.500,-2.500 5.500,-6.500 C4.500,-8.500 3,-10 1.700,-11.100 Z" fill="#0f5aa8"/></g>
</svg>
</div>
<div id="cbar" class="abs">
<svg class="abs" style="left:7px;top:5px" width="20" height="20" viewBox="0 0 20 20"><path d="M14,4.500 v11 L4,10z" fill="#2f8ad6"/></svg>
<svg class="abs" style="left:38px;top:5px" width="20" height="20" viewBox="0 0 20 20"><path d="M6,4.500 v11 L16,10z" fill="#2f8ad6"/></svg>
<svg class="abs" style="left:69px;top:5px" width="20" height="20" viewBox="0 0 20 20"><path d="M4.500,3 v13.500 h13.500 M2.500,3.500 h4 M18,14.500 v4" fill="none" stroke="#555" stroke-width="1.200"/><path d="M8.500,7 l2.800,4 2.800,-4 M11.300,11 v4" fill="none" stroke="#2f8ad6" stroke-width="1.500"/></svg>
<svg class="abs" style="left:101px;top:5px" width="20" height="20" viewBox="0 0 20 20"><circle cx="8" cy="8" r="5.200" fill="#fff" stroke="#6a6a6a" stroke-width="1.200"/><path d="M12,12 l3.600,3.600" stroke="#555" stroke-width="2" stroke-linecap="round"/><path d="M5,8 h6 M8,5 v6" stroke="#2f8ad6" stroke-width="1.800"/></svg>
<svg class="abs" style="left:133px;top:5px" width="20" height="20" viewBox="0 0 20 20"><circle cx="8" cy="8" r="5.200" fill="#fff" stroke="#6a6a6a" stroke-width="1.200"/><path d="M12,12 l3.600,3.600" stroke="#555" stroke-width="2" stroke-linecap="round"/><path d="M5,8 h6" stroke="#2f8ad6" stroke-width="1.800"/></svg>
<div class="abs" style="left:162px;top:2.500px;width:29px;height:25px;border:1px solid #c6c6c6;background:#eee"></div>
<svg class="abs" style="left:165px;top:5px" width="20" height="20" viewBox="0 0 20 20"><circle cx="8" cy="8" r="5.200" fill="#fff" stroke="#6a6a6a" stroke-width="1.200"/><path d="M12,12 l3.600,3.600" stroke="#555" stroke-width="2" stroke-linecap="round"/><path d="M4.500,8 h1.800 M7.100,8 h1.800 M9.700,8 h1.800" stroke="#2f8ad6" stroke-width="1.800"/></svg>
<svg class="abs" style="left:198px;top:5px" width="20" height="20" viewBox="0 0 20 20"><path d="M10.500,2 l4.500,3.500 -4.500,3.500 v-2.200 c-3,0 -4.500,1.500 -4.500,4 l-2.500,-1 c0,-3.500 2.500,-5.500 7,-5.500z" fill="#2f8ad6"/><path d="M9.500,18 l-4.500,-3.500 4.500,-3.500 v2.200 c3,0 4.500,-1.500 4.500,-4 l2.500,1 c0,3.500 -2.500,5.500 -7,5.500z" fill="#2f8ad6"/></svg>
<svg class="abs" style="left:230px;top:5px" width="20" height="20" viewBox="0 0 20 20"><path d="M3.500,2 v14.500 h13 M1.500,2.500 h4 M16,14.500 v4" fill="none" stroke="#555" stroke-width="1.200"/><path d="M5,14 c3,0 4,-3 7,-5 s3,-4 5,-6" fill="none" stroke="#2f8ad6" stroke-width="1.200"/><circle cx="12.500" cy="9" r="1.600" fill="#e8254f"/></svg>
<i class="sep" style="left:833px"></i><i class="sep" style="left:877px"></i><i class="sep" style="left:946px"></i><i class="sep" style="left:990px"></i><i class="sep" style="left:1034px"></i>
<svg class="abs" style="left:846px;top:7px" width="20" height="15" viewBox="0 0 20 15"><path d="M1,1.500 h7.500 l1,1 1,-1 h7.500 v11 h-7.500 l-1,1 -1,-1 h-7.500z" fill="#e7f2fc" stroke="#23466e" stroke-width="1.200"/><path d="M9.500,2.500 v11" stroke="#23466e" stroke-width="1"/><path d="M3,4.500 h4.500 M3,6.800 h4.500 M3,9.100 h3" stroke="#2b5c9a" stroke-width="1.100"/></svg>
<svg class="abs" style="left:892px;top:6px" width="14" height="15" viewBox="0 0 14 15"><path d="M1.500,0.500 h7 l4,4 v9.500 h-11z" fill="#f7f7f7" stroke="#8a97a8" stroke-width="1"/><path d="M8.500,0.500 v4 h4" fill="#dde3ea" stroke="#8a97a8" stroke-width=".8"/><path d="M3.500,11.500 c2,-1.500 3.500,-5 3.500,-7.500 c0,2.500 2,5.500 4.500,6 c-2.500,-.3 -5.500,.3 -8,1.500z" fill="none" stroke="#e0242b" stroke-width="1.100"/></svg>
<svg class="abs" style="left:921px;top:6px" width="14" height="15" viewBox="0 0 14 15"><path d="M1.500,0.500 h7 l4,4 v9.500 h-11z" fill="#f7f7f7" stroke="#8a97a8" stroke-width="1"/><path d="M8.500,0.500 v4 h4" fill="#dde3ea" stroke="#8a97a8" stroke-width=".8"/><path d="M4,6.500 l5.500,6 M9.500,6.500 l-5.500,6" stroke="#2e8b57" stroke-width="1.400"/></svg>
<svg class="abs" style="left:962px;top:4px" width="18" height="18" viewBox="0 0 18 18"><rect x="1" y="4.500" width="10.500" height="12" fill="#e4f1fd" stroke="#3a4a5c" stroke-width="1"/><path d="M3,8 h6.500 M3,10 h6.500 M3,12 h6.500 M3,14 h6.500" stroke="#2f8ad6" stroke-width="1"/><path d="M8,4.500 l4,-4 v2.300 h4.500 v3.400 h-4.500 v2.300z" fill="#fff" stroke="#444" stroke-width=".9"/></svg>
<svg class="abs" style="left:1004px;top:5px" width="18" height="17" viewBox="0 0 18 17"><rect x="4" y="1" width="9" height="6" fill="#fff" stroke="#3c6e9f" stroke-width="1"/><rect x="1" y="6" width="15" height="7" rx="2" fill="#3f8ccc" stroke="#23507c" stroke-width="1"/><rect x="4" y="10.500" width="9" height="5" fill="#fff" stroke="#3c6e9f" stroke-width="1"/></svg>
<div class="btn" style="left:1042px;top:4.500px;width:76px;height:21px;line-height:20px;font-size:15px">Очистить</div>
</div>
<div id="chart" class="abs"><svg class="abs" style="left:0;top:0" width="1127" height="339" viewBox="472 526 1127 339" font-family="DejaVu Sans,sans-serif" font-size="15.400" fill="#111" stroke="#111" stroke-width=".22">
<rect x="509.200" y="555.300" width="1084" height="242.700" fill="#fff" stroke="#e2e2e2" stroke-width="2"/>
<g stroke="#d9d9d9" stroke-width="1" fill="none"><path d="M560.3,556 V798"/><path d="M638.4,556 V798"/><path d="M716.5,556 V798"/><path d="M794.6,556 V798"/><path d="M872.7,556 V798"/><path d="M950.8,556 V798"/><path d="M1028.9,556 V798"/><path d="M1107.0,556 V798"/><path d="M1185.1,556 V798"/><path d="M1263.2,556 V798"/><path d="M1341.3,556 V798"/><path d="M1419.4,556 V798"/><path d="M1497.5,556 V798"/><path d="M1575.6,556 V798"/><path d="M509,575.50 H1593"/><path d="M509,595.83 H1593"/><path d="M509,616.16 H1593"/><path d="M509,636.49 H1593"/><path d="M509,656.82 H1593"/><path d="M509,677.15 H1593"/><path d="M509,697.48 H1593"/><path d="M509,717.81 H1593"/><path d="M509,738.14 H1593"/><path d="M509,758.47 H1593"/><path d="M509,778.80 H1593"/></g>
<g><text x="506" y="582.4" text-anchor="end">400</text><text x="506" y="602.7" text-anchor="end">390</text><text x="506" y="622.9" text-anchor="end">380</text><text x="506" y="643.2" text-anchor="end">370</text><text x="506" y="663.5" text-anchor="end">360</text><text x="506" y="683.8" text-anchor="end">350</text><text x="506" y="704.0" text-anchor="end">340</text><text x="506" y="724.3" text-anchor="end">330</text><text x="506" y="744.6" text-anchor="end">320</text><text x="506" y="764.8" text-anchor="end">310</text><text x="506" y="785.1" text-anchor="end">300</text></g>
<g><text x="559.5" y="814.500" text-anchor="middle">14 сен 2015</text><text x="559.5" y="830.500" text-anchor="middle">04:00:00</text><text x="793.8" y="814.500" text-anchor="middle">14 сен 2015</text><text x="793.8" y="830.500" text-anchor="middle">22:00:00</text><text x="1028.0" y="814.500" text-anchor="middle">15 сен 2015</text><text x="1028.0" y="830.500" text-anchor="middle">16:00:00</text><text x="1262.2" y="814.500" text-anchor="middle">16 сен 2015</text><text x="1262.2" y="830.500" text-anchor="middle">10:00:00</text><text x="1496.5" y="814.500" text-anchor="middle">17 сен 2015</text><text x="1496.5" y="830.500" text-anchor="middle">04:00:00</text></g>
<text transform="translate(513,557.500) rotate(90)" x="0" y="0">Объем, л</text>
<text x="1591" y="795" text-anchor="end">Время</text>
<path d="M508.75,628 602.5,628 603.25,594.5 604,627.6 604.52,637.7 605.06,617.4 605.39,676 606.02,629.4 606.41,655.7 606.9,611.4 607.39,647.2 607.75,600 608.4,645.5 609,620.2 609.32,652.4 609.86,632.7 610.17,656.2 610.66,685 611.31,653.4 611.98,632.5 612.6,648.8 613.27,617.7 613.61,644.7 614,615.3 614.48,656.6 614.9,634.6 615.35,651.9 615.88,633.9 616.55,661.9 617.22,626 617.91,664.2 618.28,627.8 618.96,672.4 619.49,636 619.88,672.1 620.41,651.3 620.73,674.5 621.43,657.3 622.05,666.3 622.41,655.4 623.02,680 623.33,647.8 623.65,677.2 624.08,639 624.78,674.4 625.48,661.7 625.81,678.9 626.3,672.5 672.5,673.75 680,678 712.5,678.75 717.5,681.25 727.5,682 729,665.3 729.6,704.4 730.27,662.1 730.94,687.7 731.43,653.5 731.99,712 732.33,677.7 732.73,702.4 733.26,691.5 733.65,697.2 734.32,668 734.68,713.5 735.03,676.3 735.39,695.4 736.03,692.9 736.42,722.6 737.07,692.4 737.75,711.2 738.32,697.1 739,717.9 739.69,671.1 740.11,710.9 740.47,702.5 740.8,710.7 741.34,706.3 741.91,713.7 742.34,680 742.83,714.9 743.32,687.5 743.64,735.7 743.95,686.5 744.59,712.5 745.21,705.1 745.5,748 746.06,711.9 746.74,715.4 747.34,675.9 748.02,713.9 748.75,766 749.07,704.9 749.67,674.2 750.31,697.9 750.99,691 751.43,702.3 752.09,675.7 752.76,689.7 753.19,667.7 753.56,672.5 753.92,646.9 754.5,605 755,655 756.5,647.5 916,646.5 917.5,618.75 918,633.7 918.45,644.6 919.1,643.9 919.6,665.7 919.93,634.8 920.48,646.9 921,686 921.41,664.1 921.77,645.9 922.12,659.5 922.79,639.1 923.39,658.9 923.99,652.3 924.41,668.3 925,647.9 925.34,660.1 925.72,652.9 926.34,661.2 927,638.4 927.32,667.4 927.82,661.7 928.29,684.1 928.63,651.8 928.98,676.5 929.64,663.9 930,696 930.46,668.2 930.79,678.7 931.46,663.6 931.92,685.2 932.26,660.7 932.62,685 933.31,672.5 933.83,685.7 934.19,669.8 934.89,697.9 935.24,658.8 936,698 936.46,674.7 936.91,689.6 937.44,657.9 937.78,681.9 938,675.75 990,688 1011.25,688.75 1042.5,687 1043,679.7 1043.52,718.2 1044.01,679.9 1044.55,696.6 1045.05,677.4 1045.67,697.1 1046.09,695.7 1046.71,716.6 1047.03,665.5 1047.71,717.4 1048.26,699.1 1048.57,715 1048.89,699.8 1049.29,703.8 1049.77,694.6 1050.41,719 1050.97,695.7 1051.53,720.2 1051.94,676.6 1052.64,736.4 1053.22,708.1 1053.62,721.2 1053.94,693.4 1054.4,741.6 1054.86,686.9 1055.5,720.6 1055.88,692.1 1056.37,751.5 1056.83,722 1057.5,752 1057.79,722.5 1058.22,752.3 1058.82,722.7 1059.22,725.9 1059.55,700.5 1059.92,739 1060.5,766 1060.99,715.6 1061.55,705.6 1062.02,705.5 1062.42,664.2 1063.04,696.4 1063.7,686.7 1065,602.5 1066,660 1067.5,650.75 1231,650.2 1234.5,617.5 1235,650.5 1235.57,669.9 1236.21,655.2 1236.61,660.2 1237,644.3 1237.35,670.9 1237.73,657.6 1238,700 1238.75,664.4 1239.16,667.6 1239.81,650 1240.43,687.2 1241.03,647 1241.65,674.1 1242.29,662.6 1242.89,682.9 1243.36,666.8 1243.83,677.9 1244.18,655.2 1244.8,697.3 1245.37,664.5 1245.97,676.9 1246.54,668.8 1246.92,679.3 1247.5,705 1247.91,690 1248.37,676.9 1248.86,682.3 1249.26,677.1 1249.7,680.4 1250,670 1292.5,693.75 1310,694.5 1320,698.75 1340,707.5 1352.5,710 1354,699.2 1354.62,741.5 1355.04,690.9 1355.62,732.2 1355.96,715 1356.42,736.4 1356.82,704.5 1357.25,741.4 1357.92,709.7 1358.62,720.3 1359.25,692.7 1359.61,740.2 1360.13,690.2 1360.52,736.1 1361.17,706.3 1361.59,725.5 1362.27,714.5 1362.97,729.4 1363.59,703.4 1364.26,730 1364.71,730.4 1365.31,739.8 1365.99,725.7 1366.6,759.7 1367,721.5 1367.68,750.1 1368.13,733.3 1368.74,742.9 1369.28,726.4 1369.8,743.7 1370.37,712.4 1370.79,749.6 1371.5,760 1371.87,743 1372.47,736.3 1372.96,749 1373.51,722.6 1373.93,745 1374.63,714.8 1374.94,758.7 1375.5,781 1376.1,772.2 1376.64,728.7 1377.02,737.3 1377.38,726.5 1377.76,747 1378.75,643.75 1381.25,668.75 1387.5,666.25 1391.25,626.25 1392,692.5 1395,687.5 1396.25,675 1535,672 1538,657.3 1538.61,682.2 1539.12,667.5 1539.82,679 1540.18,671.7 1540.58,680.3 1540.99,675.3 1541.42,680.7 1541.95,674.4 1542.27,679.7 1542.79,670.6 1543.38,691.8 1543.85,677.7 1544.44,691.7 1544.9,663.5 1545.32,695.9 1546,644 1546.63,683.6 1547.15,662.6 1547.77,687.1 1548.13,667.4 1548.47,694.5 1548.77,674.5 1549.27,686 1549.76,675.3 1550.2,702.6 1550.85,663.2 1551.25,689.5 1551.7,689.2 1552.28,694.8 1552.63,687.9 1553.09,705.5 1553.58,689.6 1554.15,696.2 1554.53,679.6 1555.13,699 1555.46,688 1556.02,700.2 1556.5,697.1 1556.83,704.2 1557.25,694 1557.59,714.2 1558.24,689.4 1558.57,717.6 1559,733 1559.58,720.6 1560.26,685.3 1560.79,722.7 1561.47,712.7 1561.97,717.5 1562.58,703 1562.97,722.1 1563.75,721.25 1575,722" fill="none" stroke="#dd8340" stroke-width="1.800" stroke-linejoin="round"/>
<path d="M508.75,628 602.5,628 607,625 612.5,633.75 617.5,650 625,656 626.25,665.75 673.75,665.75 678.75,674.25 712.5,674.5 728.75,675.5 732.5,690 738.75,693.75 742.5,710 746.25,711 750,675 752.5,667.5 754.5,638.75 756.25,646.25 916.25,646.25 919.5,640 923.75,650 927.5,665 932.5,671.25 938,674.25 1043,674.25 1045,690 1050,700 1053.75,716.25 1059.5,718.75 1060,687.5 1063.25,685 1064.25,646.25 1066.25,645 1231,645 1233.75,643.75 1237.5,650 1240,666.25 1245,673 1248.75,673.75 1250,685.5 1292.5,693.75 1310,694.5 1330,700 1350,702.5 1355,707.5 1358.75,717.5 1363.75,721.25 1367.5,738.75 1375,740 1377.5,722.5 1379.5,667.5 1382.5,663.75 1390,661.25 1391.25,670 1397.5,672.5 1532.5,672.5 1540,677.5 1548.75,680 1552.5,690 1560,702.5 1562.5,721.25 1575,722 1593,722" fill="none" stroke="#4a9db6" stroke-width="1.850" stroke-linejoin="round"/>
<path d="M508.75,584.5 605.75,584.5 606.15,575 608.1,575 608.5,584.5 612,584.5 612.4,575 626.35,575 626.75,584.5 729.5,584.5 729.9,575 749.6,575 750,584.5 752.5,584.5 752.9,575 755.6,575 756,584.5 919,584.5 919.4,575 922.1,575 922.5,584.5 924.5,584.5 924.9,575 938.1,575 938.5,584.5 1042.5,584.5 1042.9,575 1061.35,575 1061.75,584.5 1062,584.5 1062.4,575 1065.85,575 1066.25,584.5 1233.25,584.5 1233.65,575 1235.1,575 1235.5,584.5 1235.75,584.5 1236.15,575 1237.6,575 1238,584.5 1239.5,584.5 1239.9,575 1250.1,575 1250.5,584.5 1354.5,584.5 1354.9,575 1370.1,575 1370.5,584.5 1371.5,584.5 1371.9,575 1375.1,575 1375.5,584.5 1375.75,584.5 1376.15,575 1378.85,575 1379.25,584.5 1379.5,584.5 1379.9,575 1381.35,575 1381.75,584.5 1388.75,584.5 1389.15,575 1392.1,575 1392.5,584.5 1540,584.5 1540.4,575 1547.6,575 1548,584.5 1549.5,584.5 1549.9,575 1563.85,575 1564.25,584.5 1593,584.5" fill="none" stroke="#7a5ea6" stroke-width="1.900" stroke-linejoin="round"/>
<g stroke-width="3" fill="none"><path d="M706.500,538 H755" stroke="#dd8340"/><path d="M907.500,538 H956" stroke="#4a9db6"/><path d="M1231.500,538 H1280.500" stroke="#7a5ea6"/></g>
<text x="761" y="544.500" font-size="15.150">Уровень топлива</text>
<text x="962.500" y="544.500" font-size="15.150">Обработанный уровень топлива</text>
<text x="1286" y="544.500" font-size="15.150">Поездки</text>
<rect x="1408" y="526" width="179" height="338" fill="rgba(83,97,247,.5)"/>
</svg></div>
<div id="bottom" class="abs">
 <svg class="abs" style="left:10px;top:4px" width="18" height="18" viewBox="0 0 18 18"><rect x="1" y="1.500" width="15.500" height="15" rx="1" fill="#7fc0f0" stroke="#444" stroke-width="1"/><rect x="1.500" y="2" width="5.500" height="14" fill="#a9d6f7"/><path d="M7.500,1.500 v15" stroke="#444" stroke-width="1"/></svg>
 <i class="bsep" style="left:37px"></i><i class="bsep" style="left:74px"></i>
 <svg class="abs" style="left:47px;top:4px" width="18" height="18" viewBox="0 0 18 18"><rect x="1" y="1.500" width="15.500" height="15" rx="1" fill="#d9d9d9" stroke="#444" stroke-width="1"/><path d="M6.200,1.500 v15 M11.400,1.500 v15 M1,6.500 h15.500 M1,11.500 h15.500" stroke="#555" stroke-width="1"/></svg>
 <svg class="abs" style="left:91px;top:4px" width="30" height="18" viewBox="0 0 30 18"><path d="M0,16.500 h29" stroke="#333" stroke-width="1"/><rect x="5.500" y="2" width="14" height="10.500" fill="#9fd0f5" stroke="#2d5d78" stroke-width="1"/><path d="M19.500,5.500 h5 l3.500,4 v4.500 h-8.500z" fill="#2d5d78"/><rect x="21" y="7" width="3.500" height="3" fill="#9fd0f5"/><circle cx="10" cy="14" r="2.300" fill="#fff" stroke="#2d5d78" stroke-width="1.300"/><circle cx="24" cy="14" r="2.300" fill="#fff" stroke="#2d5d78" stroke-width="1.300"/></svg>
 <svg class="abs" style="left:136px;top:1px" width="32" height="21" viewBox="0 0 32 21"><rect x="7.500" y="5" width="14" height="10.500" fill="#9fd0f5" stroke="#2d5d78" stroke-width="1"/><path d="M21.500,8.500 h5 l3.500,4 v4.500 h-8.500z" fill="#2d5d78"/><rect x="23" y="10" width="3.500" height="3" fill="#9fd0f5"/><circle cx="12" cy="17" r="2.300" fill="#fff" stroke="#2d5d78" stroke-width="1.300"/><circle cx="26" cy="17" r="2.300" fill="#fff" stroke="#2d5d78" stroke-width="1.300"/><text x="0" y="7.500" font-family="DejaVu Sans,sans-serif" font-weight="bold" font-size="6.500" fill="#222" letter-spacing=".3">NAME</text></svg>
 <svg class="abs" style="left:187px;top:1px" width="32" height="21" viewBox="0 0 32 21"><rect x="1.500" y="5" width="14" height="10.500" fill="#9fd0f5" stroke="#2d5d78" stroke-width="1"/><path d="M15.500,8.500 h5 l3.500,4 v4.500 h-8.500z" fill="#2d5d78"/><rect x="17" y="10" width="3.500" height="3" fill="#9fd0f5"/><circle cx="6" cy="17" r="2.300" fill="#fff" stroke="#2d5d78" stroke-width="1.300"/><circle cx="20" cy="17" r="2.300" fill="#fff" stroke="#2d5d78" stroke-width="1.300"/><path d="M22,6 h4 v-2.500 l4.500,4 -4.500,4 v-2.500 h-4z" fill="#333"/></svg>
 <svg class="abs" style="left:661px;top:9px" width="8" height="11" viewBox="0 0 8 11"><path d="M1.500,1 l4.500,4.500 -4.500,4.500" fill="none" stroke="#e4e4e4" stroke-width="1"/></svg>
 <div class="abs" style="left:677px;top:0;width:70px;height:28px;line-height:30px;color:#fff;font-weight:bold;font-size:14px;white-space:nowrap">© Gurtam</div>
 <svg class="abs" style="left:757px;top:9px" width="8" height="11" viewBox="0 0 8 11"><path d="M1.500,1 l4.500,4.500 -4.500,4.500" fill="none" stroke="#e4e4e4" stroke-width="1"/></svg>
 <i class="bsep" style="left:1206px"></i><i class="bsep" style="left:1384px"></i><i class="bsep" style="left:1465px"></i>
 <svg class="abs" style="left:1223px;top:8px" width="17" height="13" viewBox="0 0 17 13"><rect x="0.500" y="0.500" width="16" height="12" fill="#e6e6e6" stroke="#7c7c7e" stroke-width="1"/><rect x="1" y="1" width="15" height="2.500" fill="#7c7c7e"/><rect x="3" y="6" width="9" height="2.500" fill="#666"/></svg>
 <div class="bdg" style="left:1243px">0</div>
 <svg class="abs" style="left:1273px;top:3px" width="26" height="20" viewBox="0 0 26 20"><path d="M1,5.500 h12 v-2.500 l6,5.500 -6,5.500 v-2.500 h-3 l-2.500,3 v-3 h-6.500z" fill="#e6e6e6" stroke="#666" stroke-width="1"/><path d="M3,8 h7 M3,10 h7" stroke="#666" stroke-width="1"/><path d="M24,3.500 h-4 v2 l-4,-3.500 4,-3.500 v2 h4z" transform="translate(0,1.500)" fill="#f2f2f2"/></svg>
 <div class="bdg" style="left:1298px">0</div>
 <svg class="abs" style="left:1333px;top:8px" width="17" height="13" viewBox="0 0 17 13"><rect x="0.500" y="0.500" width="16" height="12" fill="#e6e6e6" stroke="#7c7c7e" stroke-width="1"/><path d="M2,11 l4,-5 3,3 2.500,-2 3.500,4z" fill="#777"/><circle cx="5" cy="4" r="1.300" fill="#777"/></svg>
 <div class="bdg" style="left:1353px">0</div>
 <svg class="abs" style="left:1396px;top:7px" width="19" height="14" viewBox="0 0 19 14"><path d="M1,1 h7 l1,1 1,-1 h7.500 v11 h-7.500 l-1,1 -1,-1 h-7z" fill="#eef6fd" stroke="#23507c" stroke-width="1.200"/><path d="M9,2 v11" stroke="#23507c" stroke-width="1"/><path d="M2.800,4 h4 M2.800,6.300 h4 M2.800,8.600 h3" stroke="#2b5c9a" stroke-width="1.100"/></svg>
 <svg class="abs" style="left:1437px;top:7px" width="17" height="14" viewBox="0 0 17 14"><rect x="0" y="0" width="16.500" height="13.500" fill="#e9f3fb"/><rect x="0" y="0" width="16.500" height="3" fill="#3a7fbd"/><rect x="1" y="4" width="7" height="3.500" fill="#c0272d"/><rect x="1" y="8.500" width="7" height="4" fill="#3aa655"/><rect x="9" y="4" width="7" height="3.500" fill="#6fb5ea"/><path d="M0,7.800 h16.500 M8.500,0 v13.500 M12.500,3 v10.500" stroke="#23507c" stroke-width=".8"/></svg>
 <div class="abs" style="left:1486px;top:0;width:100px;height:28px;line-height:30px;color:#fff;font-size:14px;white-space:nowrap">11:22:44 (+10)</div>
</div>
<div id="desk" class="abs"></div>
<div class="abs" style="left:0;top:895px;width:1600px;height:1px;background:#e9e9e9"></div>
<svg class="abs corner" style="left:0;top:890px" width="6" height="6" viewBox="0 0 6 6"><path d="M0,0 V6 H6 A6,6 0 0 1 0,0Z" fill="#0a191e"/></svg>
<svg class="abs corner" style="left:1594px;top:890px" width="6" height="6" viewBox="0 0 6 6"><path d="M6,0 V6 H0 A6,6 0 0 0 6,0Z" fill="#060604"/></svg>

</body>
</html>
